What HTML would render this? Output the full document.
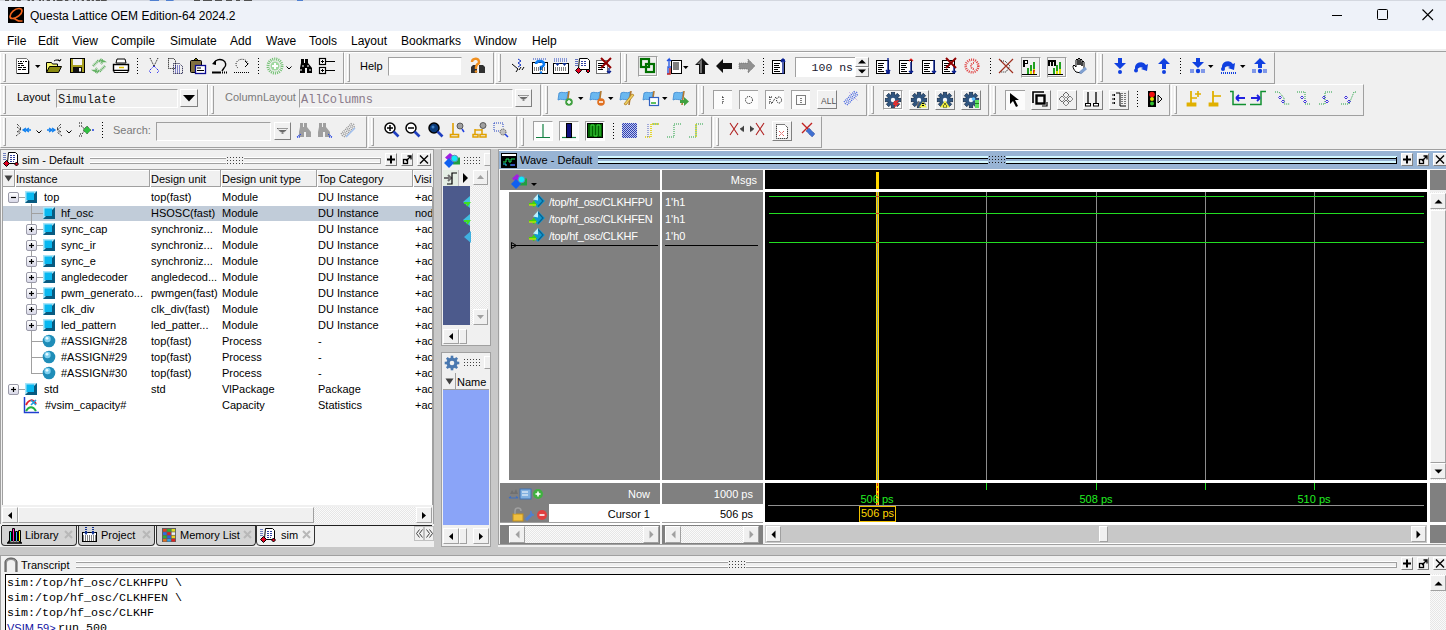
<!DOCTYPE html><html><head><meta charset="utf-8"><style>
*{margin:0;padding:0;box-sizing:border-box}
html,body{width:1446px;height:630px;overflow:hidden;background:#f0f0f0;font-family:"Liberation Sans",sans-serif;font-size:11px;color:#000}
div{position:absolute}
.t{white-space:nowrap}
svg{position:absolute;overflow:visible}
</style></head><body><div style="position:absolute;left:0px;top:0px;width:1446px;height:31px;background:#eef2f9"></div>
<svg style="left:0;top:0" width="1446" height="2"><rect width="1446" height="1" fill="#d4d8e0"/><rect x="5.0" y="0" width="4.0" height="1" fill="#505050"/><rect x="11.7" y="0" width="3.3" height="1" fill="#505050"/><rect x="16.7" y="0" width="4.1" height="1" fill="#505050"/><rect x="27.5" y="0" width="2.5" height="1" fill="#505050"/><rect x="31.7" y="0" width="2.3" height="1" fill="#505050"/><rect x="39.0" y="0" width="2.0" height="1" fill="#505050"/><rect x="42.5" y="0" width="1.5" height="1" fill="#505050"/><rect x="46.7" y="0" width="3.3" height="1" fill="#505050"/><rect x="53.0" y="0" width="2.0" height="1" fill="#505050"/><rect x="56.7" y="0" width="5.8" height="1" fill="#505050"/><rect x="65.0" y="0" width="3.3" height="1" fill="#505050"/><rect x="73.0" y="0" width="2.0" height="1" fill="#505050"/><rect x="77.5" y="0" width="1.5" height="1" fill="#505050"/><rect x="81.7" y="0" width="2.3" height="1" fill="#505050"/><rect x="86.7" y="0" width="3.3" height="1" fill="#505050"/><rect x="91.7" y="0" width="2.3" height="1" fill="#505050"/><rect x="95.8" y="0" width="4.2" height="1" fill="#505050"/><rect x="100.8" y="0" width="5.9" height="1" fill="#505050"/><rect x="194.0" y="0" width="6.0" height="1" fill="#505050"/><rect x="203.0" y="0" width="9.0" height="1" fill="#505050"/><rect x="215.0" y="0" width="7.0" height="1" fill="#505050"/><rect x="226.0" y="0" width="6.0" height="1" fill="#505050"/><rect x="236.0" y="0" width="4.0" height="1" fill="#505050"/><rect x="244.0" y="0" width="8.0" height="1" fill="#505050"/><rect x="149.8" y="0" width="9.2" height="1" fill="#5080d0"/><rect x="166.0" y="0" width="7.6" height="1" fill="#5080d0"/><rect x="297.0" y="0" width="6.0" height="1" fill="#5080d0"/></svg>
<svg style="left:8px;top:7px" width="16" height="16"><rect width="16" height="16" fill="#000"/><path d="M11 1.5c-4 0-9 4.5-9 8 0 1.5 1 2 2.5 2 4 0 9.5-4.5 9.5-7.5 0-1.5-1-2.5-3-2.5zM4.5 11.5c3 0 5 2.5 7 2.5h3" fill="none" stroke="#f0641e" stroke-width="1.7"/></svg>
<div class="t" style="left:30px;top:8px;height:16px;line-height:16px;font-size:12px;color:#000">Questa Lattice OEM Edition-64 2024.2</div>
<svg style="left:1331px;top:10px" width="12" height="10"><path d="M1 5.5h10" stroke="#000" stroke-width="1"/></svg>
<svg style="left:1377px;top:9px" width="12" height="12"><rect x="0.5" y="0.5" width="10" height="10" rx="1" fill="none" stroke="#000"/></svg>
<svg style="left:1422px;top:9px" width="12" height="12"><path d="M0.5 0.5L11 11M11 0.5L0.5 11" stroke="#000" stroke-width="1.1"/></svg>
<div style="position:absolute;left:0px;top:31px;width:1446px;height:18px;background:#fff"></div>
<div class="t" style="left:7px;top:33px;height:16px;line-height:16px;font-size:12px">File</div>
<div class="t" style="left:38px;top:33px;height:16px;line-height:16px;font-size:12px">Edit</div>
<div class="t" style="left:72px;top:33px;height:16px;line-height:16px;font-size:12px">View</div>
<div class="t" style="left:111px;top:33px;height:16px;line-height:16px;font-size:12px">Compile</div>
<div class="t" style="left:170px;top:33px;height:16px;line-height:16px;font-size:12px">Simulate</div>
<div class="t" style="left:230px;top:33px;height:16px;line-height:16px;font-size:12px">Add</div>
<div class="t" style="left:266px;top:33px;height:16px;line-height:16px;font-size:12px">Wave</div>
<div class="t" style="left:309px;top:33px;height:16px;line-height:16px;font-size:12px">Tools</div>
<div class="t" style="left:351px;top:33px;height:16px;line-height:16px;font-size:12px">Layout</div>
<div class="t" style="left:401px;top:33px;height:16px;line-height:16px;font-size:12px">Bookmarks</div>
<div class="t" style="left:474px;top:33px;height:16px;line-height:16px;font-size:12px">Window</div>
<div class="t" style="left:532px;top:33px;height:16px;line-height:16px;font-size:12px">Help</div>
<div style="position:absolute;left:0px;top:49px;width:1446px;height:99px;background:#f0f0f0"></div>
<div style="position:absolute;left:0px;top:51px;width:1446px;height:1px;background:#a0a0a0"></div>
<div style="position:absolute;left:0px;top:52px;width:344px;height:32px;border-left:1px solid #fff;border-top:1px solid #fff;border-right:1px solid #a0a0a0;border-bottom:1px solid #a0a0a0"></div>
<div style="position:absolute;left:3px;top:54px;width:3px;height:28px;border-left:1px solid #fff;border-right:1px solid #a0a0a0;border-bottom:1px solid #a0a0a0"></div>
<div style="position:absolute;left:344px;top:52px;width:150px;height:32px;border-left:1px solid #fff;border-top:1px solid #fff;border-right:1px solid #a0a0a0;border-bottom:1px solid #a0a0a0"></div>
<div style="position:absolute;left:347px;top:54px;width:3px;height:28px;border-left:1px solid #fff;border-right:1px solid #a0a0a0;border-bottom:1px solid #a0a0a0"></div>
<div style="position:absolute;left:495px;top:52px;width:126px;height:32px;border-left:1px solid #fff;border-top:1px solid #fff;border-right:1px solid #a0a0a0;border-bottom:1px solid #a0a0a0"></div>
<div style="position:absolute;left:498px;top:54px;width:3px;height:28px;border-left:1px solid #fff;border-right:1px solid #a0a0a0;border-bottom:1px solid #a0a0a0"></div>
<div style="position:absolute;left:621px;top:52px;width:475px;height:32px;border-left:1px solid #fff;border-top:1px solid #fff;border-right:1px solid #a0a0a0;border-bottom:1px solid #a0a0a0"></div>
<div style="position:absolute;left:624px;top:54px;width:3px;height:28px;border-left:1px solid #fff;border-right:1px solid #a0a0a0;border-bottom:1px solid #a0a0a0"></div>
<div style="position:absolute;left:1097px;top:52px;width:178px;height:32px;border-left:1px solid #fff;border-top:1px solid #fff;border-right:1px solid #a0a0a0;border-bottom:1px solid #a0a0a0"></div>
<div style="position:absolute;left:1100px;top:54px;width:3px;height:28px;border-left:1px solid #fff;border-right:1px solid #a0a0a0;border-bottom:1px solid #a0a0a0"></div>
<div style="position:absolute;left:0px;top:84px;width:208px;height:32px;border-left:1px solid #fff;border-top:1px solid #fff;border-right:1px solid #a0a0a0;border-bottom:1px solid #a0a0a0"></div>
<div style="position:absolute;left:3px;top:86px;width:3px;height:28px;border-left:1px solid #fff;border-right:1px solid #a0a0a0;border-bottom:1px solid #a0a0a0"></div>
<div style="position:absolute;left:208px;top:84px;width:333px;height:32px;border-left:1px solid #fff;border-top:1px solid #fff;border-right:1px solid #a0a0a0;border-bottom:1px solid #a0a0a0"></div>
<div style="position:absolute;left:211px;top:86px;width:3px;height:28px;border-left:1px solid #fff;border-right:1px solid #a0a0a0;border-bottom:1px solid #a0a0a0"></div>
<div style="position:absolute;left:542px;top:84px;width:155px;height:32px;border-left:1px solid #fff;border-top:1px solid #fff;border-right:1px solid #a0a0a0;border-bottom:1px solid #a0a0a0"></div>
<div style="position:absolute;left:545px;top:86px;width:3px;height:28px;border-left:1px solid #fff;border-right:1px solid #a0a0a0;border-bottom:1px solid #a0a0a0"></div>
<div style="position:absolute;left:698px;top:84px;width:169px;height:32px;border-left:1px solid #fff;border-top:1px solid #fff;border-right:1px solid #a0a0a0;border-bottom:1px solid #a0a0a0"></div>
<div style="position:absolute;left:701px;top:86px;width:3px;height:28px;border-left:1px solid #fff;border-right:1px solid #a0a0a0;border-bottom:1px solid #a0a0a0"></div>
<div style="position:absolute;left:868px;top:84px;width:121px;height:32px;border-left:1px solid #fff;border-top:1px solid #fff;border-right:1px solid #a0a0a0;border-bottom:1px solid #a0a0a0"></div>
<div style="position:absolute;left:871px;top:86px;width:3px;height:28px;border-left:1px solid #fff;border-right:1px solid #a0a0a0;border-bottom:1px solid #a0a0a0"></div>
<div style="position:absolute;left:990px;top:84px;width:180px;height:32px;border-left:1px solid #fff;border-top:1px solid #fff;border-right:1px solid #a0a0a0;border-bottom:1px solid #a0a0a0"></div>
<div style="position:absolute;left:993px;top:86px;width:3px;height:28px;border-left:1px solid #fff;border-right:1px solid #a0a0a0;border-bottom:1px solid #a0a0a0"></div>
<div style="position:absolute;left:1171px;top:84px;width:193px;height:32px;border-left:1px solid #fff;border-top:1px solid #fff;border-right:1px solid #a0a0a0;border-bottom:1px solid #a0a0a0"></div>
<div style="position:absolute;left:1174px;top:86px;width:3px;height:28px;border-left:1px solid #fff;border-right:1px solid #a0a0a0;border-bottom:1px solid #a0a0a0"></div>
<div style="position:absolute;left:0px;top:116px;width:367px;height:32px;border-left:1px solid #fff;border-top:1px solid #fff;border-right:1px solid #a0a0a0;border-bottom:1px solid #a0a0a0"></div>
<div style="position:absolute;left:3px;top:118px;width:3px;height:28px;border-left:1px solid #fff;border-right:1px solid #a0a0a0;border-bottom:1px solid #a0a0a0"></div>
<div style="position:absolute;left:368px;top:116px;width:149px;height:32px;border-left:1px solid #fff;border-top:1px solid #fff;border-right:1px solid #a0a0a0;border-bottom:1px solid #a0a0a0"></div>
<div style="position:absolute;left:371px;top:118px;width:3px;height:28px;border-left:1px solid #fff;border-right:1px solid #a0a0a0;border-bottom:1px solid #a0a0a0"></div>
<div style="position:absolute;left:518px;top:116px;width:194px;height:32px;border-left:1px solid #fff;border-top:1px solid #fff;border-right:1px solid #a0a0a0;border-bottom:1px solid #a0a0a0"></div>
<div style="position:absolute;left:521px;top:118px;width:3px;height:28px;border-left:1px solid #fff;border-right:1px solid #a0a0a0;border-bottom:1px solid #a0a0a0"></div>
<div style="position:absolute;left:713px;top:116px;width:109px;height:32px;border-left:1px solid #fff;border-top:1px solid #fff;border-right:1px solid #a0a0a0;border-bottom:1px solid #a0a0a0"></div>
<div style="position:absolute;left:716px;top:118px;width:3px;height:28px;border-left:1px solid #fff;border-right:1px solid #a0a0a0;border-bottom:1px solid #a0a0a0"></div>
<div style="position:absolute;left:0px;top:149px;width:1446px;height:407px;background:#c8c8c8"></div>
<div style="position:absolute;left:0px;top:149px;width:434px;height:398px;background:#f0f0f0;border-top:1px solid #a0a0a0;border-left:1px solid #a0a0a0;border-right:1px solid #a0a0a0"></div>
<div class="t" style="left:22px;top:152px;height:17px;line-height:17px;font-size:11px">sim - Default</div>
<div style="position:absolute;left:90px;top:157px;width:291px;height:1px;background:#fff"></div>
<div style="position:absolute;left:90px;top:158px;width:291px;height:1px;background:#a0a0a0"></div>
<div style="position:absolute;left:90px;top:162px;width:291px;height:1px;background:#fff"></div>
<div style="position:absolute;left:90px;top:163px;width:291px;height:1px;background:#a0a0a0"></div>
<div style="position:absolute;left:380px;top:158px;width:1px;height:6px;background:#a0a0a0"></div>
<div style="left:226px;top:156px;width:18px;height:9px;background:#f0f0f0;background-image:radial-gradient(circle,#404040 0.6px,transparent 0.9px);background-size:3px 3px;"></div>
<div style="position:absolute;left:385px;top:153px;width:12px;height:13px;background:#f0f0f0;border-right:1px solid #808080;border-bottom:1px solid #808080;border-top:1px solid #fff;border-left:1px solid #fff"></div>
<div style="position:absolute;left:401px;top:153px;width:12px;height:13px;background:#f0f0f0;border-right:1px solid #808080;border-bottom:1px solid #808080;border-top:1px solid #fff;border-left:1px solid #fff"></div>
<div style="position:absolute;left:417px;top:153px;width:14px;height:13px;background:#f0f0f0;border-right:1px solid #808080;border-bottom:1px solid #808080;border-top:1px solid #fff;border-left:1px solid #fff"></div>
<svg style="left:385px;top:153px" width="12" height="13"><path d="M6 2.5v8M2 6.5h8" stroke="#000" stroke-width="2"/></svg>
<svg style="left:401px;top:153px" width="12" height="13"><rect x="2.5" y="6.5" width="4" height="4" fill="none" stroke="#000" stroke-width="1.3"/><path d="M5 8L9.5 3.5M6.5 3h3.5v3.5" fill="none" stroke="#000" stroke-width="1.3"/></svg>
<svg style="left:417px;top:153px" width="14" height="13"><path d="M3 2.5l8 8M11 2.5l-8 8" stroke="#000" stroke-width="1.4"/></svg>
<div style="position:absolute;left:2px;top:169px;width:430px;height:18px;background:#f0f0f0;border-top:1px solid #a0a0a0;border-left:1px solid #a0a0a0;border-bottom:1px solid #a0a0a0"></div>
<div style="position:absolute;left:3px;top:170px;width:429px;height:1px;background:#fff"></div>
<div style="position:absolute;left:14px;top:170px;width:1px;height:17px;background:#a0a0a0"></div>
<div style="position:absolute;left:15px;top:170px;width:1px;height:17px;background:#fff"></div>
<div style="position:absolute;left:149px;top:170px;width:1px;height:17px;background:#a0a0a0"></div>
<div style="position:absolute;left:150px;top:170px;width:1px;height:17px;background:#fff"></div>
<div style="position:absolute;left:220px;top:170px;width:1px;height:17px;background:#a0a0a0"></div>
<div style="position:absolute;left:221px;top:170px;width:1px;height:17px;background:#fff"></div>
<div style="position:absolute;left:316px;top:170px;width:1px;height:17px;background:#a0a0a0"></div>
<div style="position:absolute;left:317px;top:170px;width:1px;height:17px;background:#fff"></div>
<div style="position:absolute;left:412px;top:170px;width:1px;height:17px;background:#a0a0a0"></div>
<div style="position:absolute;left:413px;top:170px;width:1px;height:17px;background:#fff"></div>
<svg style="left:4px;top:174px" width="9" height="9"><path d="M0.5 1.5h8L4.5 7.5z" fill="#404040"/></svg>
<div class="t" style="left:16px;top:171px;height:17px;line-height:17px;">Instance</div>
<div class="t" style="left:151px;top:171px;height:17px;line-height:17px;">Design unit</div>
<div class="t" style="left:222px;top:171px;height:17px;line-height:17px;">Design unit type</div>
<div class="t" style="left:318px;top:171px;height:17px;line-height:17px;">Top Category</div>
<div class="t" style="left:414px;top:171px;height:17px;line-height:17px;width:18px;overflow:hidden">Visit</div>
<div style="position:absolute;left:2px;top:187px;width:430px;height:318px;background:#fff;overflow:hidden;border-left:1px solid #a0a0a0"></div>
<div style="position:absolute;left:432px;top:187px;width:1px;height:318px;background:#a0a0a0"></div>
<div style="position:absolute;left:3px;top:206px;width:429px;height:15px;background:#c1ccd9"></div>
<div style="position:absolute;left:31px;top:204px;width:1px;height:170px;background:#a0a0a0"></div>
<div style="position:absolute;left:18px;top:197px;width:7px;height:1px;background:#a0a0a0"></div>
<div style="position:absolute;left:8px;top:192px;width:11px;height:11px;background:linear-gradient(#fff,#d8d8e8);border:1px solid #9a9aa8;border-radius:2px"></div>
<svg style="left:8px;top:192px" width="11" height="11"><path d="M3 5.5h5" stroke="#000" stroke-width="1.2"/></svg>
<svg style="left:25px;top:191px" width="12" height="12"><rect width="12" height="12" fill="#a8e4f8"/><path d="M12 0V12H0z" fill="#085a80"/><rect x="1.5" y="1.5" width="7.5" height="7.5" fill="#08b8f0"/></svg>
<div class="t" style="left:44px;top:189px;height:16px;line-height:16px;">top</div>
<div class="t" style="left:151px;top:189px;height:16px;line-height:16px;">top(fast)</div>
<div class="t" style="left:222px;top:189px;height:16px;line-height:16px;">Module</div>
<div class="t" style="left:318px;top:189px;height:16px;line-height:16px;">DU Instance</div>
<div class="t" style="left:415px;top:189px;height:16px;line-height:16px;width:17px;overflow:hidden">+ac</div>
<div style="position:absolute;left:32px;top:213px;width:11px;height:1px;background:#a0a0a0"></div>
<svg style="left:43px;top:207px" width="12" height="12"><rect width="12" height="12" fill="#a8e4f8"/><path d="M12 0V12H0z" fill="#085a80"/><rect x="1.5" y="1.5" width="7.5" height="7.5" fill="#08b8f0"/></svg>
<div class="t" style="left:61px;top:205px;height:16px;line-height:16px;">hf_osc</div>
<div class="t" style="left:151px;top:205px;height:16px;line-height:16px;">HSOSC(fast)</div>
<div class="t" style="left:222px;top:205px;height:16px;line-height:16px;">Module</div>
<div class="t" style="left:318px;top:205px;height:16px;line-height:16px;">DU Instance</div>
<div class="t" style="left:415px;top:205px;height:16px;line-height:16px;width:17px;overflow:hidden">nod</div>
<div style="position:absolute;left:32px;top:229px;width:11px;height:1px;background:#a0a0a0"></div>
<div style="position:absolute;left:26px;top:224px;width:11px;height:11px;background:linear-gradient(#fff,#d8d8e8);border:1px solid #9a9aa8;border-radius:2px"></div>
<svg style="left:26px;top:224px" width="11" height="11"><path d="M3 5.5h5" stroke="#000" stroke-width="1.2"/><path d="M5.5 3v5" stroke="#000" stroke-width="1.2"/></svg>
<svg style="left:43px;top:223px" width="12" height="12"><rect width="12" height="12" fill="#a8e4f8"/><path d="M12 0V12H0z" fill="#085a80"/><rect x="1.5" y="1.5" width="7.5" height="7.5" fill="#08b8f0"/></svg>
<div class="t" style="left:61px;top:221px;height:16px;line-height:16px;">sync_cap</div>
<div class="t" style="left:151px;top:221px;height:16px;line-height:16px;">synchroniz...</div>
<div class="t" style="left:222px;top:221px;height:16px;line-height:16px;">Module</div>
<div class="t" style="left:318px;top:221px;height:16px;line-height:16px;">DU Instance</div>
<div class="t" style="left:415px;top:221px;height:16px;line-height:16px;width:17px;overflow:hidden">+ac</div>
<div style="position:absolute;left:32px;top:245px;width:11px;height:1px;background:#a0a0a0"></div>
<div style="position:absolute;left:26px;top:240px;width:11px;height:11px;background:linear-gradient(#fff,#d8d8e8);border:1px solid #9a9aa8;border-radius:2px"></div>
<svg style="left:26px;top:240px" width="11" height="11"><path d="M3 5.5h5" stroke="#000" stroke-width="1.2"/><path d="M5.5 3v5" stroke="#000" stroke-width="1.2"/></svg>
<svg style="left:43px;top:239px" width="12" height="12"><rect width="12" height="12" fill="#a8e4f8"/><path d="M12 0V12H0z" fill="#085a80"/><rect x="1.5" y="1.5" width="7.5" height="7.5" fill="#08b8f0"/></svg>
<div class="t" style="left:61px;top:237px;height:16px;line-height:16px;">sync_ir</div>
<div class="t" style="left:151px;top:237px;height:16px;line-height:16px;">synchroniz...</div>
<div class="t" style="left:222px;top:237px;height:16px;line-height:16px;">Module</div>
<div class="t" style="left:318px;top:237px;height:16px;line-height:16px;">DU Instance</div>
<div class="t" style="left:415px;top:237px;height:16px;line-height:16px;width:17px;overflow:hidden">+ac</div>
<div style="position:absolute;left:32px;top:261px;width:11px;height:1px;background:#a0a0a0"></div>
<div style="position:absolute;left:26px;top:256px;width:11px;height:11px;background:linear-gradient(#fff,#d8d8e8);border:1px solid #9a9aa8;border-radius:2px"></div>
<svg style="left:26px;top:256px" width="11" height="11"><path d="M3 5.5h5" stroke="#000" stroke-width="1.2"/><path d="M5.5 3v5" stroke="#000" stroke-width="1.2"/></svg>
<svg style="left:43px;top:255px" width="12" height="12"><rect width="12" height="12" fill="#a8e4f8"/><path d="M12 0V12H0z" fill="#085a80"/><rect x="1.5" y="1.5" width="7.5" height="7.5" fill="#08b8f0"/></svg>
<div class="t" style="left:61px;top:253px;height:16px;line-height:16px;">sync_e</div>
<div class="t" style="left:151px;top:253px;height:16px;line-height:16px;">synchroniz...</div>
<div class="t" style="left:222px;top:253px;height:16px;line-height:16px;">Module</div>
<div class="t" style="left:318px;top:253px;height:16px;line-height:16px;">DU Instance</div>
<div class="t" style="left:415px;top:253px;height:16px;line-height:16px;width:17px;overflow:hidden">+ac</div>
<div style="position:absolute;left:32px;top:277px;width:11px;height:1px;background:#a0a0a0"></div>
<div style="position:absolute;left:26px;top:272px;width:11px;height:11px;background:linear-gradient(#fff,#d8d8e8);border:1px solid #9a9aa8;border-radius:2px"></div>
<svg style="left:26px;top:272px" width="11" height="11"><path d="M3 5.5h5" stroke="#000" stroke-width="1.2"/><path d="M5.5 3v5" stroke="#000" stroke-width="1.2"/></svg>
<svg style="left:43px;top:271px" width="12" height="12"><rect width="12" height="12" fill="#a8e4f8"/><path d="M12 0V12H0z" fill="#085a80"/><rect x="1.5" y="1.5" width="7.5" height="7.5" fill="#08b8f0"/></svg>
<div class="t" style="left:61px;top:269px;height:16px;line-height:16px;">angledecoder</div>
<div class="t" style="left:151px;top:269px;height:16px;line-height:16px;">angledecod...</div>
<div class="t" style="left:222px;top:269px;height:16px;line-height:16px;">Module</div>
<div class="t" style="left:318px;top:269px;height:16px;line-height:16px;">DU Instance</div>
<div class="t" style="left:415px;top:269px;height:16px;line-height:16px;width:17px;overflow:hidden">+ac</div>
<div style="position:absolute;left:32px;top:293px;width:11px;height:1px;background:#a0a0a0"></div>
<div style="position:absolute;left:26px;top:288px;width:11px;height:11px;background:linear-gradient(#fff,#d8d8e8);border:1px solid #9a9aa8;border-radius:2px"></div>
<svg style="left:26px;top:288px" width="11" height="11"><path d="M3 5.5h5" stroke="#000" stroke-width="1.2"/><path d="M5.5 3v5" stroke="#000" stroke-width="1.2"/></svg>
<svg style="left:43px;top:287px" width="12" height="12"><rect width="12" height="12" fill="#a8e4f8"/><path d="M12 0V12H0z" fill="#085a80"/><rect x="1.5" y="1.5" width="7.5" height="7.5" fill="#08b8f0"/></svg>
<div class="t" style="left:61px;top:285px;height:16px;line-height:16px;">pwm_generato...</div>
<div class="t" style="left:151px;top:285px;height:16px;line-height:16px;">pwmgen(fast)</div>
<div class="t" style="left:222px;top:285px;height:16px;line-height:16px;">Module</div>
<div class="t" style="left:318px;top:285px;height:16px;line-height:16px;">DU Instance</div>
<div class="t" style="left:415px;top:285px;height:16px;line-height:16px;width:17px;overflow:hidden">+ac</div>
<div style="position:absolute;left:32px;top:309px;width:11px;height:1px;background:#a0a0a0"></div>
<div style="position:absolute;left:26px;top:304px;width:11px;height:11px;background:linear-gradient(#fff,#d8d8e8);border:1px solid #9a9aa8;border-radius:2px"></div>
<svg style="left:26px;top:304px" width="11" height="11"><path d="M3 5.5h5" stroke="#000" stroke-width="1.2"/><path d="M5.5 3v5" stroke="#000" stroke-width="1.2"/></svg>
<svg style="left:43px;top:303px" width="12" height="12"><rect width="12" height="12" fill="#a8e4f8"/><path d="M12 0V12H0z" fill="#085a80"/><rect x="1.5" y="1.5" width="7.5" height="7.5" fill="#08b8f0"/></svg>
<div class="t" style="left:61px;top:301px;height:16px;line-height:16px;">clk_div</div>
<div class="t" style="left:151px;top:301px;height:16px;line-height:16px;">clk_div(fast)</div>
<div class="t" style="left:222px;top:301px;height:16px;line-height:16px;">Module</div>
<div class="t" style="left:318px;top:301px;height:16px;line-height:16px;">DU Instance</div>
<div class="t" style="left:415px;top:301px;height:16px;line-height:16px;width:17px;overflow:hidden">+ac</div>
<div style="position:absolute;left:32px;top:325px;width:11px;height:1px;background:#a0a0a0"></div>
<div style="position:absolute;left:26px;top:320px;width:11px;height:11px;background:linear-gradient(#fff,#d8d8e8);border:1px solid #9a9aa8;border-radius:2px"></div>
<svg style="left:26px;top:320px" width="11" height="11"><path d="M3 5.5h5" stroke="#000" stroke-width="1.2"/><path d="M5.5 3v5" stroke="#000" stroke-width="1.2"/></svg>
<svg style="left:43px;top:319px" width="12" height="12"><rect width="12" height="12" fill="#a8e4f8"/><path d="M12 0V12H0z" fill="#085a80"/><rect x="1.5" y="1.5" width="7.5" height="7.5" fill="#08b8f0"/></svg>
<div class="t" style="left:61px;top:317px;height:16px;line-height:16px;">led_pattern</div>
<div class="t" style="left:151px;top:317px;height:16px;line-height:16px;">led_patter...</div>
<div class="t" style="left:222px;top:317px;height:16px;line-height:16px;">Module</div>
<div class="t" style="left:318px;top:317px;height:16px;line-height:16px;">DU Instance</div>
<div class="t" style="left:415px;top:317px;height:16px;line-height:16px;width:17px;overflow:hidden">+ac</div>
<div style="position:absolute;left:32px;top:341px;width:11px;height:1px;background:#a0a0a0"></div>
<svg style="left:42px;top:334px" width="14" height="14"><circle cx="7" cy="7" r="6.3" fill="#1f8db8"/><circle cx="5.5" cy="5" r="3.2" fill="#7fd0ef"/><circle cx="5" cy="4.3" r="1.4" fill="#eafaff"/></svg>
<div class="t" style="left:61px;top:333px;height:16px;line-height:16px;">#ASSIGN#28</div>
<div class="t" style="left:151px;top:333px;height:16px;line-height:16px;">top(fast)</div>
<div class="t" style="left:222px;top:333px;height:16px;line-height:16px;">Process</div>
<div class="t" style="left:318px;top:333px;height:16px;line-height:16px;">-</div>
<div class="t" style="left:415px;top:333px;height:16px;line-height:16px;width:17px;overflow:hidden">+ac</div>
<div style="position:absolute;left:32px;top:357px;width:11px;height:1px;background:#a0a0a0"></div>
<svg style="left:42px;top:350px" width="14" height="14"><circle cx="7" cy="7" r="6.3" fill="#1f8db8"/><circle cx="5.5" cy="5" r="3.2" fill="#7fd0ef"/><circle cx="5" cy="4.3" r="1.4" fill="#eafaff"/></svg>
<div class="t" style="left:61px;top:349px;height:16px;line-height:16px;">#ASSIGN#29</div>
<div class="t" style="left:151px;top:349px;height:16px;line-height:16px;">top(fast)</div>
<div class="t" style="left:222px;top:349px;height:16px;line-height:16px;">Process</div>
<div class="t" style="left:318px;top:349px;height:16px;line-height:16px;">-</div>
<div class="t" style="left:415px;top:349px;height:16px;line-height:16px;width:17px;overflow:hidden">+ac</div>
<div style="position:absolute;left:32px;top:373px;width:11px;height:1px;background:#a0a0a0"></div>
<svg style="left:42px;top:366px" width="14" height="14"><circle cx="7" cy="7" r="6.3" fill="#1f8db8"/><circle cx="5.5" cy="5" r="3.2" fill="#7fd0ef"/><circle cx="5" cy="4.3" r="1.4" fill="#eafaff"/></svg>
<div class="t" style="left:61px;top:365px;height:16px;line-height:16px;">#ASSIGN#30</div>
<div class="t" style="left:151px;top:365px;height:16px;line-height:16px;">top(fast)</div>
<div class="t" style="left:222px;top:365px;height:16px;line-height:16px;">Process</div>
<div class="t" style="left:318px;top:365px;height:16px;line-height:16px;">-</div>
<div class="t" style="left:415px;top:365px;height:16px;line-height:16px;width:17px;overflow:hidden">+ac</div>
<div style="position:absolute;left:18px;top:389px;width:7px;height:1px;background:#a0a0a0"></div>
<div style="position:absolute;left:8px;top:384px;width:11px;height:11px;background:linear-gradient(#fff,#d8d8e8);border:1px solid #9a9aa8;border-radius:2px"></div>
<svg style="left:8px;top:384px" width="11" height="11"><path d="M3 5.5h5" stroke="#000" stroke-width="1.2"/><path d="M5.5 3v5" stroke="#000" stroke-width="1.2"/></svg>
<svg style="left:25px;top:383px" width="12" height="12"><rect width="12" height="12" fill="#a8e4f8"/><path d="M12 0V12H0z" fill="#085a80"/><rect x="1.5" y="1.5" width="7.5" height="7.5" fill="#08b8f0"/></svg>
<div class="t" style="left:44px;top:381px;height:16px;line-height:16px;">std</div>
<div class="t" style="left:151px;top:381px;height:16px;line-height:16px;">std</div>
<div class="t" style="left:222px;top:381px;height:16px;line-height:16px;">VlPackage</div>
<div class="t" style="left:318px;top:381px;height:16px;line-height:16px;">Package</div>
<div class="t" style="left:415px;top:381px;height:16px;line-height:16px;width:17px;overflow:hidden">+ac</div>
<svg style="left:23px;top:397px" width="16" height="16"><path d="M1.5 0v15.5H16" fill="none" stroke="#2040d0" stroke-width="1.5"/><path d="M3 8c3-6 7-6 10-1" fill="none" stroke="#e02030" stroke-width="2"/><path d="M3 14c3-5 7-5 10 0" fill="none" stroke="#20b040" stroke-width="2"/><path d="M8 3l5 5M13 3l-5 5" stroke="#20a0e0" stroke-width="1.6"/></svg>
<div class="t" style="left:45px;top:397px;height:16px;line-height:16px;">#vsim_capacity#</div>
<div class="t" style="left:151px;top:397px;height:16px;line-height:16px;"></div>
<div class="t" style="left:222px;top:397px;height:16px;line-height:16px;">Capacity</div>
<div class="t" style="left:318px;top:397px;height:16px;line-height:16px;">Statistics</div>
<div class="t" style="left:415px;top:397px;height:16px;line-height:16px;width:17px;overflow:hidden">+ac</div>
<div style="position:absolute;left:2px;top:506px;width:430px;height:17px;background:#f0f0f0"></div>
<div style="position:absolute;left:2px;top:507px;width:16px;height:16px;background:#f0f0f0;border-top:1px solid #fff;border-left:1px solid #fff;border-right:1px solid #a0a0a0;border-bottom:1px solid #a0a0a0"></div>
<svg style="left:8px;top:512px" width="5" height="8"><path d="M4 0v7L0 3.5z" fill="#000"/></svg>
<div style="position:absolute;left:18px;top:507px;width:296px;height:16px;background:#f0f0f0;border-top:1px solid #fff;border-left:1px solid #fff;border-right:1px solid #a0a0a0;border-bottom:1px solid #a0a0a0"></div>
<div style="position:absolute;left:314px;top:507px;width:102px;height:16px;background:#e8e8e8;background:repeating-conic-gradient(#fafafa 0 25%,#e6e6e6 0 50%) 0 0/2px 2px"></div>
<div style="position:absolute;left:416px;top:507px;width:16px;height:16px;background:#f0f0f0;border-top:1px solid #fff;border-left:1px solid #fff;border-right:1px solid #a0a0a0;border-bottom:1px solid #a0a0a0"></div>
<svg style="left:422px;top:512px" width="5" height="8"><path d="M0 0v7L4 3.5z" fill="#000"/></svg>
<div style="position:absolute;left:0px;top:524px;width:434px;height:23px;background:#f0f0f0"></div>
<div style="position:absolute;left:2px;top:525px;width:430px;height:1px;background:#202020"></div>
<div style="position:absolute;left:1px;top:526px;width:76px;height:20px;background:#d4d4d4;border:1px solid #303030;border-top:none;border-radius:0 0 4px 4px"></div>

<div style="position:absolute;left:78px;top:526px;width:77px;height:20px;background:#d4d4d4;border:1px solid #303030;border-top:none;border-radius:0 0 4px 4px"></div>

<div style="position:absolute;left:156px;top:526px;width:100px;height:20px;background:#d4d4d4;border:1px solid #303030;border-top:none;border-radius:0 0 4px 4px"></div>

<div style="position:absolute;left:256px;top:525px;width:59px;height:21px;background:#f0f0f0;border:1px solid #303030;border-top:1px solid #303030;border-radius:0 0 4px 4px"></div>

<div style="position:absolute;left:315px;top:526px;width:100px;height:20px;background:#f0f0f0"></div>
<div class="t" style="left:25px;top:527px;height:17px;line-height:17px;font-size:11px">Library</div>
<div class="t" style="left:101px;top:527px;height:17px;line-height:17px;font-size:11px">Project</div>
<div class="t" style="left:180px;top:527px;height:17px;line-height:17px;font-size:11px">Memory List</div>
<div class="t" style="left:281px;top:527px;height:17px;line-height:17px;font-size:11px">sim</div>
<svg style="left:64px;top:530px" width="9" height="9"><path d="M1 1l7 7M8 1l-7 7" stroke="#b8b8b8" stroke-width="2"/></svg>
<svg style="left:142px;top:530px" width="9" height="9"><path d="M1 1l7 7M8 1l-7 7" stroke="#b8b8b8" stroke-width="2"/></svg>
<svg style="left:243px;top:530px" width="9" height="9"><path d="M1 1l7 7M8 1l-7 7" stroke="#b8b8b8" stroke-width="2"/></svg>
<svg style="left:302px;top:530px" width="9" height="9"><path d="M1 1l7 7M8 1l-7 7" stroke="#b8b8b8" stroke-width="2"/></svg>
<svg style="left:6px;top:527px" width="17" height="17"><path d="M1 16h15M2 16l2-3M15 16l-2-3" stroke="#000" stroke-width="1.5"/><path d="M3.5 14V4.5h2V14zM6.5 14V1.5h2V14zM9.5 14V4.5h2V14zM12.5 14V3.5h2V14z" fill="none" stroke="#000"/><rect x="4" y="5" width="1" height="9" fill="#00f0c0"/><rect x="7" y="2" width="1" height="12" fill="#ff20c0"/><rect x="10" y="5" width="1" height="9" fill="#30b0ff"/><rect x="13" y="4" width="1" height="10" fill="#ffff00"/></svg>
<svg style="left:82px;top:527px" width="15" height="15"><rect x="0.5" y="5.5" width="14" height="9" fill="#fff" stroke="#000"/><path d="M1 9h13M1 11h13M1 13h13" stroke="#000" stroke-dasharray="1 1"/><path d="M4 0v5M11 0v5" stroke="#103090" stroke-width="2" stroke-dasharray="1 1"/><path d="M2 5l2 3 2-3zM9 5l2 3 2-3z" fill="#103090"/></svg>
<svg style="left:162px;top:528px" width="14" height="14"><rect width="14" height="14" fill="#606060"/><rect x="1.0" y="1.0" width="3.5" height="2.6" fill="#e04020"/><rect x="5.3" y="1.0" width="3.5" height="2.6" fill="#30b030"/><rect x="9.6" y="1.0" width="3.5" height="2.6" fill="#e0e020"/><rect x="1.0" y="4.3" width="3.5" height="2.6" fill="#3070e0"/><rect x="5.3" y="4.3" width="3.5" height="2.6" fill="#e02020"/><rect x="9.6" y="4.3" width="3.5" height="2.6" fill="#f0f0f0"/><rect x="1.0" y="7.6" width="3.5" height="2.6" fill="#30b030"/><rect x="5.3" y="7.6" width="3.5" height="2.6" fill="#3060e0"/><rect x="9.6" y="7.6" width="3.5" height="2.6" fill="#f0d020"/><rect x="1.0" y="10.899999999999999" width="3.5" height="2.6" fill="#e07020"/><rect x="5.3" y="10.899999999999999" width="3.5" height="2.6" fill="#30a0e0"/><rect x="9.6" y="10.899999999999999" width="3.5" height="2.6" fill="#e02020"/></svg>
<svg style="left:260px;top:527px" width="17" height="17"><path d="M0 2.5h3M0 4.5h3M0 6.5h3M0 8.5h3" stroke="#7080c0"/><path d="M5.5 1.5h7l2 2v9h-9l-1-1z" fill="#fff" stroke="#000"/><path d="M7 4.5h5M7 6.5h5M7 8.5h5M7 10.5h4" stroke="#3040a0" stroke-dasharray="2 1"/><path d="M3.5 9.5l-3 3 3 3 3-3z" fill="#e00020" stroke="#000"/><path d="M13.5 11l-2 2 2 2 2-2z" fill="#e00020" stroke="#000"/></svg>
<svg style="left:3px;top:151px" width="17" height="17"><path d="M0 2.5h3M0 4.5h3M0 6.5h3M0 8.5h3" stroke="#7080c0"/><path d="M5.5 1.5h7l2 2v9h-9l-1-1z" fill="#fff" stroke="#000"/><path d="M7 4.5h5M7 6.5h5M7 8.5h5M7 10.5h4" stroke="#3040a0" stroke-dasharray="2 1"/><path d="M3.5 9.5l-3 3 3 3 3-3z" fill="#e00020" stroke="#000"/><path d="M13.5 11l-2 2 2 2 2-2z" fill="#e00020" stroke="#000"/></svg>
<div style="position:absolute;left:414px;top:526px;width:10px;height:15px;background:#f0f0f0;border:1px solid #c0c0c0"></div>
<div style="position:absolute;left:424px;top:526px;width:10px;height:15px;background:#f0f0f0;border:1px solid #c0c0c0"></div>
<svg style="left:416px;top:529px" width="7" height="9"><path d="M3.5 0.5L0.5 4.5 3.5 8.5M6.5 0.5L3.5 4.5 6.5 8.5" fill="none" stroke="#404040"/></svg>
<svg style="left:426px;top:529px" width="7" height="9"><path d="M0.5 0.5l3 4-3 4M3.5 0.5l3 4-3 4" fill="none" stroke="#404040"/></svg>
<div style="position:absolute;left:441px;top:149px;width:50px;height:197px;background:#f0f0f0;border:1px solid #a0a0a0"></div>
<svg style="left:444px;top:152px" width="17" height="17"><path d="M1 5.5l5-4.5 4 3.5-5 4.5z" fill="#a020e0"/><rect x="9" y="5.5" width="7" height="7" fill="#20a040"/><circle cx="10.5" cy="6.5" r="3.3" fill="#10e8f8" stroke="#6090b0"/><path d="M5 6l5 5-5 5-5-5z" fill="#1060f0"/></svg>
<div style="left:463px;top:156px;width:18px;height:9px;background:#f0f0f0;background-image:radial-gradient(circle,#404040 0.6px,transparent 0.9px);background-size:3px 3px;"></div>
<div style="position:absolute;left:484px;top:153px;width:6px;height:13px;background:#f0f0f0;border-left:1px solid #fff;border-top:1px solid #fff;border-bottom:1px solid #a0a0a0"></div>
<div style="position:absolute;left:443px;top:170px;width:16px;height:16px;background:#e4eee4;border-right:1px solid #c0c0c0"></div>
<div style="position:absolute;left:459px;top:170px;width:12px;height:16px;background:#f0f0f0"></div>
<svg style="left:444px;top:172px" width="14" height="13"><path d="M0 6h5" stroke="#707070" stroke-width="2"/><path d="M4 3l3 3-3 3" fill="none" stroke="#707070" stroke-width="2"/><path d="M3 12h5V1h5" fill="none" stroke="#000" stroke-width="1.2"/></svg>
<svg style="left:463px;top:173px" width="6" height="10"><path d="M0 0v10l5-5z" fill="#000"/></svg>
<div style="position:absolute;left:443px;top:186px;width:27px;height:139px;background:#4c5a8c"></div>
<svg style="left:463px;top:196px" width="8" height="12"><path d="M7 0L0 6l7 6z" fill="#40c0e0"/><path d="M1 7h5l-2 3" fill="none" stroke="#40e020" stroke-width="2"/></svg>
<svg style="left:463px;top:214px" width="8" height="12"><path d="M7 0L0 6l7 6z" fill="#40c0e0"/><path d="M1 7h5l-2 3" fill="none" stroke="#40e020" stroke-width="2"/></svg>
<svg style="left:464px;top:231px" width="7" height="12"><path d="M7 0L0 6l7 6z" fill="#40b0e0"/></svg>
<div style="position:absolute;left:471px;top:186px;width:17px;height:139px;background:#ececec;background:repeating-conic-gradient(#fafafa 0 25%,#e6e6e6 0 50%) 0 0/2px 2px"></div>
<div style="position:absolute;left:473px;top:170px;width:15px;height:15px;background:#f0f0f0;border-top:1px solid #fff;border-left:1px solid #fff;border-right:1px solid #a0a0a0;border-bottom:1px solid #a0a0a0"></div>
<svg style="left:477px;top:175px" width="7" height="4"><path d="M0 4l3.5-4L7 4z" fill="#a0a0a0"/></svg>
<div style="position:absolute;left:473px;top:309px;width:15px;height:16px;background:#f0f0f0;border-top:1px solid #fff;border-left:1px solid #fff;border-right:1px solid #a0a0a0;border-bottom:1px solid #a0a0a0"></div>
<svg style="left:477px;top:315px" width="7" height="4"><path d="M0 0l3.5 4L7 0z" fill="#a0a0a0"/></svg>
<div style="position:absolute;left:443px;top:329px;width:16px;height:15px;background:#f0f0f0;border-top:1px solid #fff;border-left:1px solid #fff;border-right:1px solid #a0a0a0;border-bottom:1px solid #a0a0a0"></div>
<svg style="left:449px;top:333px" width="4" height="7"><path d="M4 0v7L0 3.5z" fill="#000"/></svg>
<div style="position:absolute;left:459px;top:329px;width:8px;height:15px;background:#f0f0f0;border-top:1px solid #fff;border-left:1px solid #fff;border-right:1px solid #a0a0a0;border-bottom:1px solid #a0a0a0"></div>
<div style="position:absolute;left:441px;top:352px;width:50px;height:195px;background:#f0f0f0;border:1px solid #a0a0a0"></div>
<svg style="left:444px;top:355px" width="16" height="16"><g fill="#4a78b0"><circle cx="8" cy="8" r="5.5"/></g><g stroke="#4a78b0" stroke-width="2.6"><path d="M8 8L15.30 8.00"/><path d="M8 8L13.16 13.16"/><path d="M8 8L8.00 15.30"/><path d="M8 8L2.84 13.16"/><path d="M8 8L0.70 8.00"/><path d="M8 8L2.84 2.84"/><path d="M8 8L8.00 0.70"/><path d="M8 8L13.16 2.84"/></g><circle cx="8" cy="8" r="2.3" fill="#f0f0f0"/></svg>
<div style="left:463px;top:358px;width:18px;height:9px;background:#f0f0f0;background-image:radial-gradient(circle,#404040 0.6px,transparent 0.9px);background-size:3px 3px;"></div>
<div style="position:absolute;left:484px;top:356px;width:6px;height:13px;background:#f0f0f0;border-left:1px solid #fff;border-top:1px solid #fff;border-bottom:1px solid #a0a0a0"></div>
<div style="position:absolute;left:443px;top:372px;width:46px;height:18px;background:#f0f0f0;border-bottom:1px solid #a0a0a0"></div>
<div style="position:absolute;left:455px;top:373px;width:1px;height:16px;background:#a0a0a0"></div>
<svg style="left:445px;top:377px" width="9" height="9"><path d="M0.5 1.5h8L4.5 7.5z" fill="#404040"/></svg>
<div class="t" style="left:457px;top:374px;height:17px;line-height:17px;">Name</div>
<div style="position:absolute;left:443px;top:390px;width:46px;height:135px;background:#8aa4f8"></div>
<div style="position:absolute;left:443px;top:526px;width:46px;height:19px;background:#f0f0f0"></div>
<div style="position:absolute;left:443px;top:528px;width:16px;height:16px;background:#f0f0f0;border-top:1px solid #fff;border-left:1px solid #fff;border-right:1px solid #a0a0a0;border-bottom:1px solid #a0a0a0"></div>
<svg style="left:449px;top:533px" width="4" height="7"><path d="M4 0v7L0 3.5z" fill="#000"/></svg>
<div style="position:absolute;left:459px;top:528px;width:8px;height:16px;background:#f0f0f0;border-top:1px solid #fff;border-left:1px solid #fff;border-right:1px solid #a0a0a0;border-bottom:1px solid #a0a0a0"></div>
<div style="position:absolute;left:473px;top:528px;width:16px;height:16px;background:#f0f0f0;border-top:1px solid #fff;border-left:1px solid #fff;border-right:1px solid #a0a0a0;border-bottom:1px solid #a0a0a0"></div>
<svg style="left:479px;top:533px" width="4" height="7"><path d="M0 0v7L4 3.5z" fill="#000"/></svg>
<div style="position:absolute;left:498px;top:149px;width:948px;height:398px;background:#f0f0f0;border-top:1px solid #a0a0a0;border-left:1px solid #a0a0a0"></div>
<div style="position:absolute;left:499px;top:150px;width:947px;height:1px;background:#fff"></div>
<div style="position:absolute;left:499px;top:151px;width:947px;height:18px;background:#98b4d4"></div>
<div style="position:absolute;left:499px;top:169px;width:947px;height:1px;background:#f4f4f4"></div>
<div style="position:absolute;left:598px;top:156px;width:799px;height:2px;background:#d4f8ff"></div>
<div style="position:absolute;left:598px;top:158px;width:799px;height:1px;background:#000"></div>
<div style="position:absolute;left:598px;top:161px;width:799px;height:2px;background:#d4f8ff"></div>
<div style="position:absolute;left:598px;top:163px;width:799px;height:1px;background:#000"></div>
<div style="position:absolute;left:1396px;top:157px;width:1px;height:7px;background:#000"></div>
<div style="left:988px;top:155px;width:18px;height:10px;background:#98b4d4;background-image:radial-gradient(circle,#202020 0.6px,transparent 0.9px);background-size:3px 3px;"></div>
<svg style="left:501px;top:153px" width="16" height="15"><rect x="0.5" y="0.5" width="15" height="14" fill="#fff" stroke="#000"/><rect x="1" y="3" width="14" height="11" fill="#000"/><path d="M2 9h3V6h3v3h2V6h4" fill="none" stroke="#20e060" stroke-width="1"/><path d="M2 11h3v2M9 12h5" fill="none" stroke="#20d0f0"/><path d="M10 12h4" stroke="#6040ff"/></svg>
<div class="t" style="left:520px;top:151px;height:18px;line-height:18px;font-size:11px">Wave - Default</div>
<div style="position:absolute;left:1401px;top:153px;width:12px;height:13px;background:#f0f0f0;border-right:1px solid #808080;border-bottom:1px solid #808080;border-top:1px solid #fff;border-left:1px solid #fff"></div>
<div style="position:absolute;left:1417px;top:153px;width:12px;height:13px;background:#f0f0f0;border-right:1px solid #808080;border-bottom:1px solid #808080;border-top:1px solid #fff;border-left:1px solid #fff"></div>
<div style="position:absolute;left:1433px;top:153px;width:14px;height:13px;background:#f0f0f0;border-right:1px solid #808080;border-bottom:1px solid #808080;border-top:1px solid #fff;border-left:1px solid #fff"></div>
<svg style="left:1401px;top:153px" width="12" height="13"><path d="M6 2.5v8M2 6.5h8" stroke="#000" stroke-width="2"/></svg>
<svg style="left:1417px;top:153px" width="12" height="13"><rect x="2.5" y="6.5" width="4" height="4" fill="none" stroke="#000" stroke-width="1.3"/><path d="M5 8L9.5 3.5M6.5 3h3.5v3.5" fill="none" stroke="#000" stroke-width="1.3"/></svg>
<svg style="left:1433px;top:153px" width="14" height="13"><path d="M3 2.5l8 8M11 2.5l-8 8" stroke="#000" stroke-width="1.4"/></svg>
<div style="position:absolute;left:500px;top:170px;width:160px;height:20px;background:#808080"></div>
<div style="position:absolute;left:660px;top:170px;width:2px;height:355px;background:#fff"></div>
<div style="position:absolute;left:662px;top:170px;width:101px;height:20px;background:#808080"></div>
<div style="position:absolute;left:763px;top:170px;width:2px;height:355px;background:#fff"></div>
<div style="position:absolute;left:500px;top:190px;width:263px;height:2px;background:#fff"></div>
<svg style="left:511px;top:173px" width="28" height="17"><path d="M1 5.5l5-4.5 4 3.5-5 4.5z" fill="#a020e0"/><rect x="9" y="5.5" width="7" height="7" fill="#20a040"/><circle cx="10.5" cy="6.5" r="3.3" fill="#10e8f8" stroke="#6090b0"/><path d="M5 6l5 5-5 5-5-5z" fill="#1060f0"/><path d="M20 10h6l-3 3z" fill="#000"/></svg>
<div class="t" style="left:700px;top:172px;height:17px;line-height:17px;color:#fff;text-align:right;width:57px">Msgs</div>
<div style="position:absolute;left:500px;top:192px;width:160px;height:288px;background:#808080"></div>
<div style="position:absolute;left:500px;top:192px;width:9px;height:288px;background:#fff"></div>
<div style="position:absolute;left:662px;top:192px;width:101px;height:288px;background:#808080"></div>
<svg style="left:528px;top:194px" width="18" height="16"><path d="M10 0l7 7-7 7-5-5z" fill="#109ad0"/><path d="M10 1.5l5 5.5-5 5.5" fill="none" stroke="#0a6090" stroke-width="1.2"/><path d="M10 0l-5 5.5 5 1z" fill="#b8f0ff"/><path d="M1 10h6l-2 -2.5M7 10l-2 2.5" fill="none" stroke="#40d010" stroke-width="2.2"/><path d="M1 11h7" stroke="#f0f000" stroke-width="1"/></svg>
<div class="t" style="left:549px;top:194px;height:16px;line-height:16px;color:#fff;letter-spacing:-0.25px">/top/hf_osc/CLKHFPU</div>
<div class="t" style="left:665px;top:194px;height:16px;line-height:16px;color:#fff">1'h1</div>
<svg style="left:528px;top:211px" width="18" height="16"><path d="M10 0l7 7-7 7-5-5z" fill="#109ad0"/><path d="M10 1.5l5 5.5-5 5.5" fill="none" stroke="#0a6090" stroke-width="1.2"/><path d="M10 0l-5 5.5 5 1z" fill="#b8f0ff"/><path d="M1 10h6l-2 -2.5M7 10l-2 2.5" fill="none" stroke="#40d010" stroke-width="2.2"/><path d="M1 11h7" stroke="#f0f000" stroke-width="1"/></svg>
<div class="t" style="left:549px;top:211px;height:16px;line-height:16px;color:#fff;letter-spacing:-0.25px">/top/hf_osc/CLKHFEN</div>
<div class="t" style="left:665px;top:211px;height:16px;line-height:16px;color:#fff">1'h1</div>
<svg style="left:528px;top:228px" width="18" height="16"><path d="M10 0l7 7-7 7-5-5z" fill="#109ad0"/><path d="M10 1.5l5 5.5-5 5.5" fill="none" stroke="#0a6090" stroke-width="1.2"/><path d="M10 0l-5 5.5 5 1z" fill="#b8f0ff"/><path d="M1 10h6l-2 -2.5M7 10l-2 2.5" fill="none" stroke="#40d010" stroke-width="2.2"/><path d="M1 11h7" stroke="#f0f000" stroke-width="1"/></svg>
<div class="t" style="left:549px;top:228px;height:16px;line-height:16px;color:#fff;letter-spacing:-0.25px">/top/hf_osc/CLKHF</div>
<div class="t" style="left:665px;top:228px;height:16px;line-height:16px;color:#fff">1'h0</div>
<div style="position:absolute;left:512px;top:245px;width:146px;height:1px;background:#000"></div>
<div style="position:absolute;left:665px;top:245px;width:93px;height:1px;background:#000"></div>
<svg style="left:511px;top:242px" width="6" height="7"><path d="M0.5 0.5v6l5-3z" fill="none" stroke="#000"/></svg>
<div style="position:absolute;left:500px;top:480px;width:263px;height:3px;background:#fff"></div>
<div style="position:absolute;left:500px;top:483px;width:160px;height:21px;background:#808080"></div>
<div style="position:absolute;left:662px;top:483px;width:101px;height:21px;background:#808080"></div>
<div style="position:absolute;left:500px;top:504px;width:49px;height:19px;background:#808080"></div>
<div style="position:absolute;left:549px;top:504px;width:111px;height:19px;background:#fff"></div>
<div style="position:absolute;left:662px;top:504px;width:101px;height:19px;background:#fff"></div>
<div class="t" style="left:600px;top:486px;height:16px;line-height:16px;color:#fff;text-align:right;width:50px">Now</div>
<div class="t" style="left:590px;top:506px;height:16px;line-height:16px;color:#000;text-align:right;width:60px">Cursor 1</div>
<div class="t" style="left:690px;top:486px;height:16px;line-height:16px;color:#fff;text-align:right;width:63px">1000 ps</div>
<div class="t" style="left:690px;top:506px;height:16px;line-height:16px;color:#000;text-align:right;width:63px">506 ps</div>
<div style="position:absolute;left:500px;top:522px;width:263px;height:3px;background:#fff"></div>
<div style="position:absolute;left:500px;top:522px;width:160px;height:1px;background:#a0a0a0"></div>
<div style="position:absolute;left:662px;top:522px;width:101px;height:1px;background:#a0a0a0"></div>
<div style="position:absolute;left:500px;top:525px;width:160px;height:19px;background:#808080"></div>
<div style="position:absolute;left:662px;top:525px;width:101px;height:19px;background:#808080"></div>
<svg style="left:508px;top:487px" width="38" height="14"><path d="M1 11h9M1 11l2-1.5M10 11l-2-1.5" stroke="#4070c0" stroke-width="1.2" fill="none"/><path d="M2 7l2-4 2 3 2-4 2 5" fill="#707070"/><rect x="12" y="2" width="11" height="10" fill="#80b0e0" stroke="#4070b0"/><path d="M14 5h6M14 8h6" stroke="#fff"/><circle cx="30" cy="7" r="5" fill="#40b040"/><path d="M30 4.5v5M27.5 7h5" stroke="#fff" stroke-width="1.6"/></svg>
<svg style="left:512px;top:507px" width="36" height="15"><rect x="1" y="7" width="10" height="7" fill="#f0c040" stroke="#c09020"/><path d="M3 7V4a3 3 0 0 1 6 0" fill="none" stroke="#a0a0a0" stroke-width="1.5"/><path d="M14 13l6-6" stroke="#5080d0" stroke-width="3"/><path d="M19 4a3 3 0 0 0 3 4" fill="none" stroke="#5080d0" stroke-width="1.6"/><circle cx="30" cy="8" r="5" fill="#e04040"/><path d="M27.5 8h5" stroke="#fff" stroke-width="1.6"/></svg>
<div style="position:absolute;left:509px;top:526px;width:150px;height:17px;background:#e8e8e8;background:repeating-conic-gradient(#fafafa 0 25%,#e6e6e6 0 50%) 0 0/2px 2px"></div>
<div style="position:absolute;left:509px;top:526px;width:16px;height:17px;background:#f0f0f0;border-top:1px solid #fff;border-left:1px solid #fff;border-right:1px solid #a0a0a0;border-bottom:1px solid #a0a0a0"></div>
<div style="position:absolute;left:643px;top:526px;width:16px;height:17px;background:#f0f0f0;border-top:1px solid #fff;border-left:1px solid #fff;border-right:1px solid #a0a0a0;border-bottom:1px solid #a0a0a0"></div>
<svg style="left:515px;top:530px" width="5" height="9"><path d="M4.5 0.5v8L0.5 4.5z" fill="#a0a0a0"/></svg>
<svg style="left:649px;top:530px" width="5" height="9"><path d="M0.5 0.5v8L4.5 4.5z" fill="#a0a0a0"/></svg>
<div style="position:absolute;left:665px;top:526px;width:94px;height:17px;background:#e8e8e8;background:repeating-conic-gradient(#fafafa 0 25%,#e6e6e6 0 50%) 0 0/2px 2px"></div>
<div style="position:absolute;left:665px;top:526px;width:16px;height:17px;background:#f0f0f0;border-top:1px solid #fff;border-left:1px solid #fff;border-right:1px solid #a0a0a0;border-bottom:1px solid #a0a0a0"></div>
<div style="position:absolute;left:743px;top:526px;width:16px;height:17px;background:#f0f0f0;border-top:1px solid #fff;border-left:1px solid #fff;border-right:1px solid #a0a0a0;border-bottom:1px solid #a0a0a0"></div>
<svg style="left:671px;top:530px" width="5" height="9"><path d="M4.5 0.5v8L0.5 4.5z" fill="#a0a0a0"/></svg>
<svg style="left:749px;top:530px" width="5" height="9"><path d="M0.5 0.5v8L4.5 4.5z" fill="#a0a0a0"/></svg>
<div style="position:absolute;left:765px;top:170px;width:662px;height:19px;background:#000"></div>
<div style="position:absolute;left:765px;top:189px;width:662px;height:3px;background:#fff"></div>
<div style="position:absolute;left:765px;top:192px;width:662px;height:288px;background:#000"></div>
<div style="position:absolute;left:1427px;top:170px;width:3px;height:374px;background:#fff"></div>
<div style="position:absolute;left:1430px;top:170px;width:16px;height:20px;background:#808080"></div>
<div style="position:absolute;left:986px;top:192px;width:1px;height:288px;background:#8c8c8c"></div>
<div style="position:absolute;left:1096px;top:192px;width:1px;height:288px;background:#8c8c8c"></div>
<div style="position:absolute;left:1205px;top:192px;width:1px;height:288px;background:#8c8c8c"></div>
<div style="position:absolute;left:1314px;top:192px;width:1px;height:288px;background:#8c8c8c"></div>
<div style="position:absolute;left:769px;top:196px;width:655px;height:1px;background:#22dd22"></div>
<div style="position:absolute;left:769px;top:213px;width:655px;height:1px;background:#22dd22"></div>
<div style="position:absolute;left:769px;top:242px;width:655px;height:1px;background:#22dd22"></div>
<div style="position:absolute;left:876px;top:172px;width:3px;height:17px;background:#ffd700"></div>
<div style="position:absolute;left:876px;top:192px;width:3px;height:288px;background:#ffd200"></div>
<div style="position:absolute;left:877px;top:192px;width:1px;height:288px;background:#8aa88a"></div>
<div style="position:absolute;left:876px;top:196px;width:3px;height:1px;background:#d03020"></div>
<div style="position:absolute;left:876px;top:213px;width:3px;height:1px;background:#d03020"></div>
<div style="position:absolute;left:876px;top:242px;width:3px;height:1px;background:#d03020"></div>
<div style="position:absolute;left:765px;top:480px;width:662px;height:3px;background:#fff"></div>
<div style="position:absolute;left:765px;top:483px;width:662px;height:39px;background:#000"></div>
<div style="position:absolute;left:768px;top:505px;width:656px;height:1px;background:#909090"></div>
<div style="position:absolute;left:986px;top:483px;width:1px;height:7px;background:#22dd22"></div>
<div style="position:absolute;left:1096px;top:483px;width:1px;height:7px;background:#22dd22"></div>
<div style="position:absolute;left:1205px;top:483px;width:1px;height:7px;background:#22dd22"></div>
<div style="position:absolute;left:1314px;top:483px;width:1px;height:7px;background:#22dd22"></div>
<div style="position:absolute;left:876px;top:483px;width:3px;height:22px;background:#ffd700"></div>
<svg style="left:877px;top:483px" width="1" height="22"><path d="M0.5 0v22" stroke="#e02020" stroke-dasharray="3 2"/></svg>
<div class="t" style="left:847px;top:491px;height:16px;line-height:16px;color:#22ee22;width:60px;text-align:center">506 ps</div>
<div class="t" style="left:1066px;top:491px;height:16px;line-height:16px;color:#22ee22;width:60px;text-align:center">508 ps</div>
<div class="t" style="left:1284px;top:491px;height:16px;line-height:16px;color:#22ee22;width:60px;text-align:center">510 ps</div>
<div style="position:absolute;left:859px;top:506px;width:37px;height:16px;background:#000;border:1px solid #f0c000"></div>
<div class="t" style="left:859px;top:506px;height:15px;line-height:15px;color:#ffd700;width:37px;text-align:center">506 ps</div>
<div style="position:absolute;left:765px;top:522px;width:662px;height:3px;background:#fff"></div>
<div style="position:absolute;left:765px;top:525px;width:662px;height:18px;background:#c8c8c8"></div>
<div style="position:absolute;left:766px;top:526px;width:15px;height:16px;background:#f0f0f0;border-top:1px solid #fff;border-left:1px solid #fff;border-right:1px solid #a0a0a0;border-bottom:1px solid #a0a0a0"></div>
<svg style="left:771px;top:530px" width="5" height="9"><path d="M4.5 0.5v8L0.5 4.5z" fill="#000"/></svg>
<div style="position:absolute;left:1099px;top:526px;width:9px;height:16px;background:#f0f0f0;border-top:1px solid #fff;border-left:1px solid #fff;border-right:1px solid #a0a0a0;border-bottom:1px solid #a0a0a0"></div>
<div style="position:absolute;left:1411px;top:526px;width:15px;height:16px;background:#f0f0f0;border-top:1px solid #fff;border-left:1px solid #fff;border-right:1px solid #a0a0a0;border-bottom:1px solid #a0a0a0"></div>
<svg style="left:1416px;top:530px" width="5" height="9"><path d="M0.5 0.5v8L4.5 4.5z" fill="#000"/></svg>
<div style="position:absolute;left:765px;top:543px;width:662px;height:1px;background:#fff"></div>
<div style="position:absolute;left:1430px;top:192px;width:16px;height:288px;background:#ececec;background:repeating-conic-gradient(#fafafa 0 25%,#e6e6e6 0 50%) 0 0/2px 2px"></div>
<div style="position:absolute;left:1430px;top:193px;width:16px;height:16px;background:#f0f0f0;border-top:1px solid #fff;border-left:1px solid #fff;border-right:1px solid #a0a0a0;border-bottom:1px solid #a0a0a0"></div>
<svg style="left:1434px;top:199px" width="9" height="5"><path d="M0.5 4.5h8L4.5 0.5z" fill="#000"/></svg>
<div style="position:absolute;left:1430px;top:210px;width:16px;height:253px;background:#f0f0f0;border-top:1px solid #fff;border-left:1px solid #fff;border-right:1px solid #a0a0a0;border-bottom:1px solid #a0a0a0"></div>
<div style="position:absolute;left:1430px;top:463px;width:16px;height:16px;background:#f0f0f0;border-top:1px solid #fff;border-left:1px solid #fff;border-right:1px solid #a0a0a0;border-bottom:1px solid #a0a0a0"></div>
<svg style="left:1434px;top:469px" width="9" height="5"><path d="M0.5 0.5h8L4.5 4.5z" fill="#000"/></svg>
<div style="position:absolute;left:1430px;top:480px;width:16px;height:3px;background:#fff"></div>
<div style="position:absolute;left:1430px;top:483px;width:16px;height:39px;background:#808080"></div>
<div style="position:absolute;left:1430px;top:522px;width:16px;height:3px;background:#fff"></div>
<div style="position:absolute;left:1430px;top:525px;width:16px;height:18px;background:#808080"></div>
<div style="position:absolute;left:498px;top:544px;width:948px;height:3px;background:#f0f0f0;border-top:1px solid #a0a0a0"></div>
<div style="position:absolute;left:0px;top:555px;width:1446px;height:75px;background:#f0f0f0;border-top:1px solid #a0a0a0;border-left:1px solid #a0a0a0"></div>
<svg style="left:4px;top:557px" width="14" height="16"><path d="M1 15V5a6 4 0 0 1 12 0v10" fill="#909090" stroke="#505050"/><path d="M3 15V6a4 3 0 0 1 8 0v9" fill="#f0f0f0"/></svg>
<div class="t" style="left:21px;top:556px;height:18px;line-height:18px;font-size:11px">Transcript</div>
<div style="position:absolute;left:76px;top:561px;width:1321px;height:1px;background:#fff"></div>
<div style="position:absolute;left:76px;top:562px;width:1321px;height:1px;background:#a0a0a0"></div>
<div style="position:absolute;left:76px;top:566px;width:1321px;height:1px;background:#fff"></div>
<div style="position:absolute;left:76px;top:567px;width:1321px;height:1px;background:#a0a0a0"></div>
<div style="position:absolute;left:1396px;top:562px;width:1px;height:6px;background:#a0a0a0"></div>
<div style="left:728px;top:560px;width:18px;height:9px;background:#f0f0f0;background-image:radial-gradient(circle,#404040 0.6px,transparent 0.9px);background-size:3px 3px;"></div>
<div style="position:absolute;left:1401px;top:557px;width:12px;height:13px;background:#f0f0f0;border-right:1px solid #808080;border-bottom:1px solid #808080;border-top:1px solid #fff;border-left:1px solid #fff"></div>
<div style="position:absolute;left:1417px;top:557px;width:12px;height:13px;background:#f0f0f0;border-right:1px solid #808080;border-bottom:1px solid #808080;border-top:1px solid #fff;border-left:1px solid #fff"></div>
<div style="position:absolute;left:1433px;top:557px;width:14px;height:13px;background:#f0f0f0;border-right:1px solid #808080;border-bottom:1px solid #808080;border-top:1px solid #fff;border-left:1px solid #fff"></div>
<svg style="left:1401px;top:557px" width="12" height="13"><path d="M6 2.5v8M2 6.5h8" stroke="#000" stroke-width="2"/></svg>
<svg style="left:1417px;top:557px" width="12" height="13"><rect x="2.5" y="6.5" width="4" height="4" fill="none" stroke="#000" stroke-width="1.3"/><path d="M5 8L9.5 3.5M6.5 3h3.5v3.5" fill="none" stroke="#000" stroke-width="1.3"/></svg>
<svg style="left:1433px;top:557px" width="14" height="13"><path d="M3 2.5l8 8M11 2.5l-8 8" stroke="#000" stroke-width="1.4"/></svg>
<div style="position:absolute;left:5px;top:574px;width:1425px;height:56px;background:#fff;border-top:1px solid #000;border-left:1px solid #000"></div>
<div class="t" style="left:7px;top:576px;height:15px;line-height:15px;font-family:'Liberation Mono',monospace;font-size:11.67px;color:#000">sim:/top/hf_osc/CLKHFPU \</div>
<div class="t" style="left:7px;top:591px;height:15px;line-height:15px;font-family:'Liberation Mono',monospace;font-size:11.67px;color:#000">sim:/top/hf_osc/CLKHFEN \</div>
<div class="t" style="left:7px;top:606px;height:15px;line-height:15px;font-family:'Liberation Mono',monospace;font-size:11.67px;color:#000">sim:/top/hf_osc/CLKHF</div>
<div class="t" style="left:7px;top:621px;height:15px;line-height:15px;color:#1010a0;font-size:11px">VSIM 59&gt;</div>
<div class="t" style="left:58px;top:621px;height:15px;line-height:15px;font-family:'Liberation Mono',monospace;font-size:11.67px;color:#000">run 500</div>
<div style="position:absolute;left:1430px;top:574px;width:16px;height:56px;background:#ececec;background:repeating-conic-gradient(#fafafa 0 25%,#e6e6e6 0 50%) 0 0/2px 2px"></div>
<div style="position:absolute;left:1430px;top:575px;width:16px;height:16px;background:#f0f0f0;border-top:1px solid #fff;border-left:1px solid #fff;border-right:1px solid #a0a0a0;border-bottom:1px solid #a0a0a0"></div>
<svg style="left:1434px;top:581px" width="9" height="5"><path d="M0.5 4.5h8L4.5 0.5z" fill="#000"/></svg>
<svg style="left:16px;top:58px" width="14" height="16" viewBox="0 0 14 16"><path d="M0.5 0.5h10l2.5 2.5v12.5H0.5z" fill="#fff" stroke="#707070"/><path d="M12.5 3v13M1 15.5h12" stroke="#000"/><g fill="#000"><rect x="2" y="3" width="1" height="1"/><rect x="4" y="3" width="2" height="1"/><rect x="7" y="3" width="1" height="1"/><rect x="9" y="3" width="2" height="1"/><rect x="2" y="5" width="5" height="1"/><rect x="2" y="7" width="2" height="1"/><rect x="5" y="7" width="3" height="1"/><rect x="2" y="9" width="4" height="1"/><rect x="7" y="9" width="3" height="1"/><rect x="2" y="11" width="3" height="1"/><rect x="6" y="11" width="4" height="1"/></g></svg>
<svg style="left:35px;top:65px" width="6" height="4"><path d="M0 0h5.5L2.75 3z" fill="#000"/></svg>
<svg style="left:46px;top:58px" width="16" height="16" viewBox="0 0 16 16"><path d="M0.5 4.5h5l1 1.5h5v8H0.5z" fill="#f8f870" stroke="#000"/><path d="M0.5 14.5l3-6h12l-3 6z" fill="#8a8a10" stroke="#000"/><path d="M8 3a4 3 0 0 1 6 0M14 3l1-2M14 3l-2 -1" fill="none" stroke="#000"/></svg>
<svg style="left:70px;top:58px" width="15" height="15" viewBox="0 0 15 15"><rect x="0.5" y="0.5" width="14" height="14" fill="#a8a020" stroke="#000"/><rect x="3" y="1" width="9" height="6" fill="#f4f4f4"/><rect x="3" y="9" width="9" height="5.5" fill="#101010"/><rect x="9" y="10" width="2" height="3.5" fill="#f0f0f0"/></svg>
<svg style="left:91px;top:58px" width="16" height="16" viewBox="0 0 16 16"><path d="M2 8l5-5h5l-3 -2M12 3l-2 3M14 8l-5 5H4l3 2M4 13l2-3" fill="none" stroke="#60b060" stroke-width="2.4" stroke-dasharray="1 0.6"/></svg>
<svg style="left:113px;top:58px" width="16" height="15" viewBox="0 0 16 15"><path d="M4 1h8l1 4H3z" fill="#fff" stroke="#000"/><path d="M0.5 6.5h15v6h-15z" fill="#fff" stroke="#000" stroke-width="1.4"/><path d="M1 12.5h14v2H1z" fill="#fff" stroke="#000"/><path d="M6 9.5h5" stroke="#e0c000" stroke-width="1.5"/></svg>
<svg style="left:137px;top:58px" width="1" height="16"><path d="M0.5 0V16" stroke="#000" stroke-dasharray="1 2"/></svg>
<svg style="left:148px;top:58px" width="12" height="16" viewBox="0 0 12 16"><path d="M2 0l4 8M10 0l-4 8" stroke="#000" stroke-dasharray="1 1"/><path d="M6 8l-5 5 2 2M6 8l5 5-2 2" fill="none" stroke="#1010f0" stroke-dasharray="1.2 1"/></svg>
<svg style="left:168px;top:58px" width="16" height="16" viewBox="0 0 16 16"><path d="M0.5 0.5h5l2 2v8h-7z" fill="none" stroke="#000" stroke-dasharray="1 1"/><path d="M5.5 5.5h6l3 3v7h-9z" fill="none" stroke="#000030" stroke-dasharray="1 1"/><path d="M7 8h6M7 10h6M7 12h6M7 14h6" stroke="#1010a0" stroke-dasharray="1 1"/></svg>
<svg style="left:190px;top:58px" width="16" height="16" viewBox="0 0 16 16"><rect x="0.5" y="2.5" width="11" height="12" rx="1" fill="#807040" stroke="#000"/><path d="M4 2h4l-2 -2z" fill="#f0e000" stroke="#000"/><rect x="5.5" y="7.5" width="10" height="8" fill="#fff" stroke="#0a0a90" stroke-width="1.3"/><path d="M7 10h4M7 12.5h7" stroke="#000"/></svg>
<svg style="left:212px;top:58px" width="16" height="16" viewBox="0 0 16 16"><path d="M2 5a6 5 0 1 1 10 5l-2 3" fill="none" stroke="#000" stroke-width="1.4"/><path d="M0 6l4-4v5z" fill="#000"/><path d="M0 14.5h9" stroke="#000" stroke-width="2"/><path d="M10 14.5h5" stroke="#000" stroke-width="2" stroke-dasharray="1 1"/></svg>
<svg style="left:234px;top:58px" width="16" height="16" viewBox="0 0 16 16"><path d="M14 6a6 5 0 1 0 -10 4" fill="none" stroke="#000" stroke-dasharray="1 1.2"/><path d="M11 3l3 3-3 3" fill="none" stroke="#000"/><path d="M0 14.5h16" stroke="#000" stroke-dasharray="1 1"/></svg>
<svg style="left:258px;top:58px" width="1" height="16"><path d="M0.5 0V16" stroke="#000" stroke-dasharray="1 2"/></svg>
<svg style="left:267px;top:58px" width="16" height="16" viewBox="0 0 16 16"><circle cx="8" cy="8" r="7" fill="none" stroke="#70c070" stroke-width="3" stroke-dasharray="1 1"/><circle cx="8" cy="8" r="4.5" fill="#a0d8a0"/><path d="M5 8h6M8 5v6" stroke="#fff" stroke-width="2"/></svg>
<svg style="left:286px;top:66px" width="6" height="4"><path d="M0.5 0.5l2.5 2.5 2.5-2.5" fill="none" stroke="#000"/></svg>
<svg style="left:298px;top:58px" width="16" height="16" viewBox="0 0 16 16"><path d="M3 1h3v4h1v-4h3v4l4 5v5H9v-5H7v5H2v-5l1 -5z" fill="#000"/><path d="M3 11v2M12 11v2M5 7v2M10 7v2" stroke="#fff"/></svg>
<svg style="left:319px;top:58px" width="16" height="16" viewBox="0 0 16 16"><rect x="0.5" y="0.5" width="6" height="6" fill="#fff" stroke="#000" stroke-width="1.2"/><rect x="0.5" y="9.5" width="6" height="6" fill="#fff" stroke="#000" stroke-width="1.2"/><path d="M2 3.5h3M3.5 2v3M2 12.5h3M3.5 11v3M7 3.5h9M7 12.5h9" stroke="#000"/></svg>
<div class="t" style="left:360px;top:58px;height:17px;line-height:17px;">Help</div>
<div style="position:absolute;left:388px;top:57px;width:74px;height:19px;background:#fff;border-top:1px solid #a0a0a0;border-left:1px solid #a0a0a0;border-right:1px solid #f0f0f0;border-bottom:1px solid #f0f0f0"></div>
<svg style="left:470px;top:58px" width="16" height="16" viewBox="0 0 16 16"><path d="M3 7h4v8H1v-6zM9 7h4l2 2v6H9z" fill="#303030"/><path d="M2 4a3.5 3 0 1 1 5 2.5L6 9v2" fill="none" stroke="#f09020" stroke-width="2.4"/><circle cx="6" cy="13.5" r="1.3" fill="#f09020"/></svg>
<svg style="left:511px;top:58px" width="16" height="16" viewBox="0 0 16 16"><path d="M1 6l6 5M5 14l2-3M8 12l2-3M11 12l2-3" fill="none" stroke="#000"/><path d="M7 1l3 2-3 2 3 2-3 2" fill="none" stroke="#1030c0"/></svg>
<svg style="left:532px;top:58px" width="16" height="16" viewBox="0 0 16 16"><rect x="0.5" y="4.5" width="15" height="11" fill="#fff" stroke="#000"/><path d="M1 1h14" stroke="#2040c0" stroke-dasharray="1 1"/><path d="M4 6a4 3 0 1 1 5 3v3" fill="none" stroke="#0a7af0" stroke-width="2.6"/><circle cx="9" cy="14.5" r="1.3" fill="#0a7af0"/><path d="M2 10h12M2 12h12" stroke="#000" stroke-dasharray="1 1"/></svg>
<svg style="left:553px;top:58px" width="16" height="16" viewBox="0 0 16 16"><rect x="0.5" y="5.5" width="15" height="10" fill="#fff" stroke="#000"/><path d="M1 1h14M1 3h14" stroke="#2040c0" stroke-dasharray="1 1"/><path d="M2 5l2.5 3 2.5-3zM9 5l2.5 3 2.5-3z" fill="#103090"/><path d="M2 10h12M2 12h12" stroke="#000" stroke-dasharray="1 1"/></svg>
<svg style="left:575px;top:58px" width="16" height="16" viewBox="0 0 16 16"><path d="M0 1.5h3M0 3.5h3M0 5.5h3M0 7.5h3" stroke="#6070c0"/><path d="M4.5 0.5h8l2 2v9h-10l-1-1z" fill="#fff" stroke="#000"/><path d="M6 3.5h6M6 5.5h6M6 7.5h6" stroke="#3040a0" stroke-dasharray="2 1"/><path d="M3.5 9.5l-3 3 3 3 3-3z" fill="#e00020" stroke="#000"/><path d="M13 11l-2 2 2 2 2-2z" fill="#e00020" stroke="#000"/></svg>
<svg style="left:596px;top:58px" width="16" height="16" viewBox="0 0 16 16"><rect x="0.5" y="2.5" width="11" height="13" fill="#fff" stroke="#707070"/><path d="M2 5.5h7M2 7.5h5M2 9.5h7M2 11.5h5" stroke="#000"/><path d="M5 0l10 10M15 0L5 10" stroke="#900000" stroke-width="2"/><path d="M13 10v5M11 13l2 2 2-2" fill="none" stroke="#0a2090" stroke-width="1.3"/></svg>
<div style="position:absolute;left:638px;top:56px;width:20px;height:21px;background:#f0f0f0;border-top:1px solid #a0a0a0;border-left:1px solid #a0a0a0;border-right:1px solid #fff;border-bottom:1px solid #fff;box-shadow:inset -1px -1px 0 #a0a0a0"></div>
<svg style="left:640px;top:58px" width="15" height="15" viewBox="0 0 15 15"><rect x="1" y="1" width="8" height="8" fill="none" stroke="#007000" stroke-width="2.2"/><rect x="6" y="6" width="8" height="8" fill="none" stroke="#007000" stroke-width="2.2"/></svg>
<svg style="left:666px;top:58px" width="16" height="16" viewBox="0 0 16 16"><rect x="5.5" y="2.5" width="10" height="13" fill="#fff" stroke="#000"/><path d="M7 5h6M7 7h6M7 9h6M7 11h6" stroke="#000"/><path d="M2 16V9h3M3 8V1l-2 2M3 1l2 2" fill="none" stroke="#2050e0" stroke-width="1.3"/><path d="M1 16h3V10" fill="none" stroke="#c02020" stroke-width="1.5"/></svg>
<svg style="left:683px;top:66px" width="6" height="4"><path d="M0 0h5.5L2.75 3z" fill="#000"/></svg>
<svg style="left:694px;top:58px" width="16" height="16" viewBox="0 0 16 16"><path d="M8 0l7 7h-4v9H5V7H1z" fill="#101010"/><path d="M8 1l-5 5h3v9h2z" fill="#707070"/></svg>
<svg style="left:716px;top:58px" width="16" height="16" viewBox="0 0 16 16"><path d="M0 8l7-7v4h9v6H7v4z" fill="#101010"/></svg>
<svg style="left:739px;top:58px" width="16" height="16" viewBox="0 0 16 16"><path d="M16 8l-7-7v4H0v6h9v4z" fill="#909090" stroke="#606060" stroke-width="0.6" stroke-dasharray="1 1"/></svg>
<svg style="left:763px;top:58px" width="1" height="16"><path d="M0.5 0V16" stroke="#000" stroke-dasharray="1 2"/></svg>
<svg style="left:772px;top:58px" width="16" height="16" viewBox="0 0 16 16"><rect x="0.5" y="2.5" width="12" height="13" fill="#fff" stroke="#000"/><path d="M2 5.5h6M2 7.5h5M2 9.5h6M2 11.5h4M2 13.5h6" stroke="#000"/><path d="M11 16V1M9 4l2-3 2 3M9 2h4" fill="none" stroke="#0a2090" stroke-width="1.4"/></svg>
<div style="position:absolute;left:795px;top:57px;width:61px;height:20px;background:#fff;border-top:1px solid #a0a0a0;border-left:1px solid #a0a0a0"></div>
<div class="t" style="left:795px;top:59px;height:18px;line-height:18px;font-family:'Liberation Mono',monospace;font-size:11.5px;color:#201830;width:58px;text-align:right">100 ns</div>
<div style="position:absolute;left:855px;top:57px;width:14px;height:10px;background:#f0f0f0;border-top:1px solid #fff;border-left:1px solid #fff;border-right:1px solid #808080;border-bottom:1px solid #808080"></div>
<div style="position:absolute;left:855px;top:67px;width:14px;height:10px;background:#f0f0f0;border-top:1px solid #fff;border-left:1px solid #fff;border-right:1px solid #808080;border-bottom:1px solid #808080"></div>
<svg style="left:858px;top:59px" width="8" height="16"><path d="M0 4.5h8L4 0.5zM0 10.5h8L4 14.5z" fill="#000"/></svg>
<svg style="left:876px;top:58px" width="16" height="16" viewBox="0 0 16 16"><rect x="0.5" y="2.5" width="12" height="13" fill="#fff" stroke="#000"/><path d="M2 5.5h6M2 7.5h5M2 9.5h6M2 11.5h4M2 13.5h6" stroke="#000"/><path d="M12 0v15M10 12l2 3 2-3M10 15h4" fill="none" stroke="#0a2090" stroke-width="1.4"/></svg>
<svg style="left:899px;top:58px" width="16" height="16" viewBox="0 0 16 16"><rect x="0.5" y="2.5" width="12" height="13" fill="#fff" stroke="#000"/><path d="M2 5.5h6M2 7.5h5M2 9.5h6M2 11.5h4M2 13.5h6" stroke="#000"/><path d="M12 4v11M10 13l2 2 2-2" fill="none" stroke="#0a2090" stroke-width="1.4"/><path d="M10 3l2-2 2 2" fill="none" stroke="#e02020" stroke-width="1.2"/></svg>
<svg style="left:922px;top:58px" width="16" height="16" viewBox="0 0 16 16"><rect x="0.5" y="2.5" width="12" height="13" fill="#fff" stroke="#000"/><path d="M2 5.5h6M2 7.5h5M2 9.5h6M2 11.5h4M2 13.5h6" stroke="#000"/><path d="M12 2v13M10 13l2 2 2-2" fill="none" stroke="#0a2090" stroke-width="1.4"/></svg>
<svg style="left:942px;top:58px" width="16" height="16" viewBox="0 0 16 16"><rect x="0.5" y="2.5" width="12" height="13" fill="#fff" stroke="#000"/><path d="M2 5.5h6M2 7.5h5M2 9.5h6M2 11.5h4M2 13.5h6" stroke="#000"/><path d="M12 8v7M10 13l2 2 2-2" fill="none" stroke="#0a2090" stroke-width="1.4"/><path d="M4 0l10 10M14 0L4 10" stroke="#900000" stroke-width="2"/></svg>
<svg style="left:964px;top:58px" width="16" height="16" viewBox="0 0 16 16"><circle cx="8" cy="8" r="6.3" fill="none" stroke="#e04040" stroke-width="2.5" stroke-dasharray="1 1"/><path d="M10 5a3 3 0 1 0 0 6" fill="none" stroke="#e04040" stroke-width="2" stroke-dasharray="1 1"/></svg>
<svg style="left:990px;top:58px" width="1" height="16"><path d="M0.5 0V16" stroke="#000" stroke-dasharray="1 2"/></svg>
<svg style="left:998px;top:58px" width="16" height="16" viewBox="0 0 16 16"><path d="M1 1l14 14M15 1L1 15" stroke="#a03020" stroke-width="1.2"/><path d="M3 3h4l5 5-4 6H3" fill="none" stroke="#202020" stroke-dasharray="1 1"/></svg>
<div style="position:absolute;left:1021px;top:57px;width:20px;height:21px;background:#f0f0f0;border-top:1px solid #a0a0a0;border-left:1px solid #a0a0a0;border-right:1px solid #fff;border-bottom:1px solid #fff;box-shadow:inset -1px -1px 0 #a0a0a0"></div>
<svg style="left:1022px;top:59px" width="16" height="16" viewBox="0 0 16 16"><path d="M1 1h5v4H3v3H1z" fill="#000"/><rect x="3" y="2" width="2" height="2" fill="#fff"/><path d="M5 16V9h2v7zM8 16V6h2v10zM11 16V3h2v13z" fill="#20a020"/><path d="M8 16v-4h2v4M11 16v-6h2v6" fill="#e0e000"/><path d="M11 16V11h2" fill="#e02020"/><path d="M0 15.5h15" stroke="#000"/></svg>
<div style="position:absolute;left:1047px;top:57px;width:20px;height:21px;background:#f0f0f0;border-top:1px solid #a0a0a0;border-left:1px solid #a0a0a0;border-right:1px solid #fff;border-bottom:1px solid #fff;box-shadow:inset -1px -1px 0 #a0a0a0"></div>
<svg style="left:1048px;top:59px" width="16" height="16" viewBox="0 0 16 16"><path d="M0 1h8v6H6V3H5v4H3V3H2v4H0z" fill="#000"/><path d="M5 16V9h2v7zM8 16V6h2v10zM11 16V3h2v13z" fill="#20a020"/><path d="M8 16v-4h2v4M11 16v-6h2v6" fill="#e0e000"/><path d="M0 15.5h15" stroke="#000"/></svg>
<svg style="left:1072px;top:58px" width="16" height="16" viewBox="0 0 16 16"><path d="M4 14c-2-2-3-4-3-6l1-1 2 2V2l1-1 1 1v5V1l1-1 1 1v6V2l1-1 1 1v6V4l1-1 1 1v7c0 2-1 3-3 4z" fill="#fff" stroke="#000"/><path d="M8 15l6-5" stroke="#80a0d0" stroke-width="3"/></svg>
<svg style="left:1112px;top:58px" width="16" height="16" viewBox="0 0 16 16"><path d="M6 0h4v5h4l-6 6-6-6h4z" fill="#1040e0"/><circle cx="8" cy="14" r="2" fill="#1040e0"/></svg>
<svg style="left:1133px;top:58px" width="16" height="16" viewBox="0 0 16 16"><path d="M2 11a6 6 0 0 1 11 -4l2-1-1 7-6-2 2-1a4 4 0 0 0 -6 2" fill="#1040e0"/><circle cx="3" cy="12.5" r="2" fill="#1040e0"/></svg>
<svg style="left:1156px;top:58px" width="16" height="16" viewBox="0 0 16 16"><path d="M8 0l6 6h-4v5H6V6H2z" fill="#1040e0"/><circle cx="8" cy="14" r="2" fill="#1040e0"/></svg>
<svg style="left:1180px;top:58px" width="1" height="16"><path d="M0.5 0V16" stroke="#000" stroke-dasharray="1 2"/></svg>
<svg style="left:1190px;top:58px" width="16" height="16" viewBox="0 0 16 16"><path d="M6 0h4v4h4l-6 6-6-6h4z" fill="#1040e0"/><path d="M1 11v4M3 11v4M14 11v4M12 11v4" stroke="#1040e0"/><circle cx="8" cy="13" r="2.2" fill="#1040e0"/></svg>
<svg style="left:1208px;top:65px" width="6" height="4"><path d="M0 0h5.5L2.75 3z" fill="#000"/></svg>
<svg style="left:1220px;top:58px" width="16" height="16" viewBox="0 0 16 16"><path d="M2 10a6 6 0 0 1 11 -4l2-1-1 7-6-2 2-1a4 4 0 0 0 -6 2" fill="#1040e0"/><circle cx="3" cy="11" r="2" fill="#1040e0"/><path d="M1 15h15" stroke="#1040e0" stroke-dasharray="1 1" stroke-width="2"/></svg>
<svg style="left:1240px;top:65px" width="6" height="4"><path d="M0 0h5.5L2.75 3z" fill="#000"/></svg>
<svg style="left:1252px;top:58px" width="16" height="16" viewBox="0 0 16 16"><path d="M8 0l6 6h-4v4H6V6H2z" fill="#1040e0"/><path d="M1 11v4M3 11v4M14 11v4M12 11v4" stroke="#1040e0"/><circle cx="8" cy="13" r="2.2" fill="#1040e0"/></svg>
<div class="t" style="left:17px;top:89px;height:17px;line-height:17px;">Layout</div>
<div style="position:absolute;left:56px;top:89px;width:122px;height:19px;background:#f0f0f0;border-top:1px solid #a0a0a0;border-left:1px solid #a0a0a0;border-right:1px solid #fff;border-bottom:1px solid #fff"></div>
<div class="t" style="left:58px;top:91px;height:18px;line-height:18px;font-family:'Liberation Mono',monospace;font-size:12px;color:#202020">Simulate</div>
<div style="position:absolute;left:180px;top:89px;width:18px;height:18px;background:#f0f0f0;border-top:1px solid #fff;border-left:1px solid #fff;border-right:1px solid #808080;border-bottom:1px solid #808080"></div>
<svg style="left:183px;top:95px" width="12" height="7"><path d="M0 0h12L6 6.5z" fill="#000"/></svg>
<div class="t" style="left:225px;top:89px;height:17px;line-height:17px;color:#7a7a7a">ColumnLayout</div>
<div style="position:absolute;left:299px;top:89px;width:214px;height:19px;background:#f0f0f0;border-top:1px solid #a0a0a0;border-left:1px solid #a0a0a0;border-right:1px solid #fff;border-bottom:1px solid #fff"></div>
<div class="t" style="left:301px;top:91px;height:18px;line-height:18px;font-family:'Liberation Mono',monospace;font-size:12px;color:#8a7a8a">AllColumns</div>
<div style="position:absolute;left:515px;top:89px;width:17px;height:18px;background:#f0f0f0;border-top:1px solid #fff;border-left:1px solid #fff;border-right:1px solid #808080;border-bottom:1px solid #808080"></div>
<svg style="left:518px;top:95px" width="11" height="7"><path d="M0.5 0.5h10L5.5 6z" fill="none" stroke="#404040" stroke-dasharray="1 1"/><path d="M2 2h7L5.5 5z" fill="#303030" opacity=".7"/></svg>
<svg style="left:558px;top:90px" width="16" height="16" viewBox="0 0 16 16"><path d="M1 3c3-2 6 1 9-1l-1 7c-3 2-6-1-9 1z" fill="#6ab8f0" stroke="#3a88d0" stroke-width="0.8"/><path d="M11 1l-2 14" stroke="#b07830" stroke-width="1.6"/><circle cx="11" cy="12" r="3.8" fill="#40a040"/><path d="M11 10v4M9 12h4" stroke="#fff" stroke-width="1.5"/></svg>
<svg style="left:578px;top:97px" width="6" height="4"><path d="M0 0h5.5L2.75 3z" fill="#000"/></svg>
<svg style="left:590px;top:90px" width="16" height="16" viewBox="0 0 16 16"><path d="M1 3c3-2 6 1 9-1l-1 7c-3 2-6-1-9 1z" fill="#6ab8f0" stroke="#3a88d0" stroke-width="0.8"/><path d="M11 1l-2 14" stroke="#b07830" stroke-width="1.6"/><circle cx="11" cy="12" r="3.8" fill="#e07020"/><path d="M9 12h4" stroke="#fff" stroke-width="1.5"/></svg>
<svg style="left:608px;top:97px" width="6" height="4"><path d="M0 0h5.5L2.75 3z" fill="#000"/></svg>
<svg style="left:620px;top:90px" width="16" height="16" viewBox="0 0 16 16"><path d="M1 3c3-2 6 1 9-1l-1 7c-3 2-6-1-9 1z" fill="#6ab8f0" stroke="#3a88d0" stroke-width="0.8"/><path d="M11 1l-2 14" stroke="#b07830" stroke-width="1.6"/><path d="M14 5L6 15l-2-1L12 4z" fill="#f0d060" stroke="#b08020" stroke-width="0.8"/></svg>
<svg style="left:643px;top:90px" width="16" height="16" viewBox="0 0 16 16"><path d="M1 3c3-2 6 1 9-1l-1 7c-3 2-6-1-9 1z" fill="#6ab8f0" stroke="#3a88d0" stroke-width="0.8"/><path d="M11 1l-2 14" stroke="#b07830" stroke-width="1.6"/><rect x="6.5" y="7.5" width="9" height="8" fill="#fff" stroke="#3060c0" stroke-width="1.2"/><path d="M8 13h5" stroke="#60c060" stroke-width="2"/></svg>
<svg style="left:662px;top:97px" width="6" height="4"><path d="M0 0h5.5L2.75 3z" fill="#000"/></svg>
<svg style="left:673px;top:90px" width="16" height="16" viewBox="0 0 16 16"><path d="M1 3c3-2 6 1 9-1l-1 7c-3 2-6-1-9 1z" fill="#6ab8f0" stroke="#3a88d0" stroke-width="0.8"/><path d="M11 1l-2 14" stroke="#b07830" stroke-width="1.6"/><path d="M7 10h4V7l5 4.5-5 4.5v-3H7z" fill="#40a040"/></svg>
<div style="position:absolute;left:713px;top:90px;width:19px;height:19px;background:#fcfcfc;border-top:1px solid #a0a0a0;border-left:1px solid #a0a0a0"></div>
<svg style="left:715px;top:92px" width="16" height="16"><path d="M8 5v6M7 11h2M7 5h2" stroke="#000" stroke-dasharray="1 1"/></svg>
<div style="position:absolute;left:739px;top:90px;width:19px;height:19px;background:#fcfcfc;border-top:1px solid #a0a0a0;border-left:1px solid #a0a0a0"></div>
<svg style="left:741px;top:92px" width="16" height="16"><circle cx="8" cy="8" r="3.5" fill="none" stroke="#000" stroke-dasharray="1 1"/></svg>
<div style="position:absolute;left:765px;top:90px;width:19px;height:19px;background:#fcfcfc;border-top:1px solid #a0a0a0;border-left:1px solid #a0a0a0"></div>
<svg style="left:767px;top:92px" width="16" height="16"><path d="M3 5v6M2 5h3M2 11h3M5 11l4-6M12 5a2.5 3 0 1 0 .1 0" fill="none" stroke="#000" stroke-dasharray="1 1"/></svg>
<div style="position:absolute;left:791px;top:90px;width:19px;height:19px;background:#fcfcfc;border-top:1px solid #a0a0a0;border-left:1px solid #a0a0a0"></div>
<svg style="left:793px;top:92px" width="16" height="16"><rect x="3.5" y="3.5" width="9" height="9" fill="none" stroke="#000" stroke-dasharray="1 1"/><path d="M8 6v5" stroke="#000" stroke-dasharray="1 1"/></svg>
<div style="position:absolute;left:817px;top:90px;width:20px;height:19px;background:#f0f0f0;border-top:1px solid #fff;border-left:1px solid #fff;border-right:1px solid #808080;border-bottom:1px solid #808080"></div>
<svg style="left:820px;top:93px" width="16" height="14"><text x="1" y="11" font-family="Liberation Sans" font-size="8.5" fill="#505050">ALL</text></svg>
<svg style="left:843px;top:90px" width="16" height="16" viewBox="0 0 16 16"><path d="M2 14l12-12M4 15l11-11M1 12l11-11" stroke="#4060e0" stroke-width="1.5" stroke-dasharray="1 1"/><path d="M6 2l2 2M12 8l3 3" stroke="#c0a0e0" stroke-dasharray="1 1"/></svg>
<div style="position:absolute;left:883px;top:90px;width:20px;height:20px;background:#fafafa;border-top:1px solid #a0a0a0;border-left:1px solid #a0a0a0;border-right:1px solid #fff;border-bottom:1px solid #fff;box-shadow:inset -1px -1px 0 #a0a0a0"></div>
<div style="position:absolute;left:909px;top:90px;width:20px;height:20px;background:#f0f0f0;border-top:1px solid #fff;border-left:1px solid #fff;border-right:1px solid #808080;border-bottom:1px solid #808080"></div>
<div style="position:absolute;left:935px;top:90px;width:20px;height:20px;background:#f0f0f0;border-top:1px solid #fff;border-left:1px solid #fff;border-right:1px solid #808080;border-bottom:1px solid #808080"></div>
<div style="position:absolute;left:961px;top:90px;width:20px;height:20px;background:#f0f0f0;border-top:1px solid #fff;border-left:1px solid #fff;border-right:1px solid #808080;border-bottom:1px solid #808080"></div>
<svg style="left:885px;top:92px" width="16" height="16" viewBox="0 0 16 16"><g fill="#30557f" stroke="#1a2a40" stroke-width="0.7"><rect x="6.3" y="0.3" width="3.4" height="4" transform="rotate(0 8 8)"/><rect x="6.3" y="0.3" width="3.4" height="4" transform="rotate(45 8 8)"/><rect x="6.3" y="0.3" width="3.4" height="4" transform="rotate(90 8 8)"/><rect x="6.3" y="0.3" width="3.4" height="4" transform="rotate(135 8 8)"/><rect x="6.3" y="0.3" width="3.4" height="4" transform="rotate(180 8 8)"/><rect x="6.3" y="0.3" width="3.4" height="4" transform="rotate(225 8 8)"/><rect x="6.3" y="0.3" width="3.4" height="4" transform="rotate(270 8 8)"/><rect x="6.3" y="0.3" width="3.4" height="4" transform="rotate(315 8 8)"/><circle cx="8" cy="8" r="5.3"/></g><g fill="#30557f"><rect x="6.6" y="0.6" width="2.8" height="4" transform="rotate(0 8 8)"/><rect x="6.6" y="0.6" width="2.8" height="4" transform="rotate(45 8 8)"/><rect x="6.6" y="0.6" width="2.8" height="4" transform="rotate(90 8 8)"/><rect x="6.6" y="0.6" width="2.8" height="4" transform="rotate(135 8 8)"/><rect x="6.6" y="0.6" width="2.8" height="4" transform="rotate(180 8 8)"/><rect x="6.6" y="0.6" width="2.8" height="4" transform="rotate(225 8 8)"/><rect x="6.6" y="0.6" width="2.8" height="4" transform="rotate(270 8 8)"/><rect x="6.6" y="0.6" width="2.8" height="4" transform="rotate(315 8 8)"/><circle cx="8" cy="8" r="5"/></g><circle cx="8" cy="8" r="2.2" fill="#f4f8fc"/><path d="M9 9l5-1-2 3 3 0-6 5 1-3-2 0z" fill="#e03030"/></svg>
<svg style="left:911px;top:92px" width="16" height="16" viewBox="0 0 16 16"><g fill="#30557f" stroke="#1a2a40" stroke-width="0.7"><rect x="6.3" y="0.3" width="3.4" height="4" transform="rotate(0 8 8)"/><rect x="6.3" y="0.3" width="3.4" height="4" transform="rotate(45 8 8)"/><rect x="6.3" y="0.3" width="3.4" height="4" transform="rotate(90 8 8)"/><rect x="6.3" y="0.3" width="3.4" height="4" transform="rotate(135 8 8)"/><rect x="6.3" y="0.3" width="3.4" height="4" transform="rotate(180 8 8)"/><rect x="6.3" y="0.3" width="3.4" height="4" transform="rotate(225 8 8)"/><rect x="6.3" y="0.3" width="3.4" height="4" transform="rotate(270 8 8)"/><rect x="6.3" y="0.3" width="3.4" height="4" transform="rotate(315 8 8)"/><circle cx="8" cy="8" r="5.3"/></g><g fill="#30557f"><rect x="6.6" y="0.6" width="2.8" height="4" transform="rotate(0 8 8)"/><rect x="6.6" y="0.6" width="2.8" height="4" transform="rotate(45 8 8)"/><rect x="6.6" y="0.6" width="2.8" height="4" transform="rotate(90 8 8)"/><rect x="6.6" y="0.6" width="2.8" height="4" transform="rotate(135 8 8)"/><rect x="6.6" y="0.6" width="2.8" height="4" transform="rotate(180 8 8)"/><rect x="6.6" y="0.6" width="2.8" height="4" transform="rotate(225 8 8)"/><rect x="6.6" y="0.6" width="2.8" height="4" transform="rotate(270 8 8)"/><rect x="6.6" y="0.6" width="2.8" height="4" transform="rotate(315 8 8)"/><circle cx="8" cy="8" r="5"/></g><circle cx="8" cy="8" r="2.2" fill="#f4f8fc"/><path d="M8 9l-2 5" stroke="#707070" stroke-width="1.5"/><path d="M8 15.5l4-6 4 6z" fill="#f0f040"/><path d="M11 11.5h2M11 13.5h2" stroke="#000"/></svg>
<svg style="left:937px;top:92px" width="16" height="16" viewBox="0 0 16 16"><g fill="#30557f" stroke="#1a2a40" stroke-width="0.7"><rect x="6.3" y="0.3" width="3.4" height="4" transform="rotate(0 8 8)"/><rect x="6.3" y="0.3" width="3.4" height="4" transform="rotate(45 8 8)"/><rect x="6.3" y="0.3" width="3.4" height="4" transform="rotate(90 8 8)"/><rect x="6.3" y="0.3" width="3.4" height="4" transform="rotate(135 8 8)"/><rect x="6.3" y="0.3" width="3.4" height="4" transform="rotate(180 8 8)"/><rect x="6.3" y="0.3" width="3.4" height="4" transform="rotate(225 8 8)"/><rect x="6.3" y="0.3" width="3.4" height="4" transform="rotate(270 8 8)"/><rect x="6.3" y="0.3" width="3.4" height="4" transform="rotate(315 8 8)"/><circle cx="8" cy="8" r="5.3"/></g><g fill="#30557f"><rect x="6.6" y="0.6" width="2.8" height="4" transform="rotate(0 8 8)"/><rect x="6.6" y="0.6" width="2.8" height="4" transform="rotate(45 8 8)"/><rect x="6.6" y="0.6" width="2.8" height="4" transform="rotate(90 8 8)"/><rect x="6.6" y="0.6" width="2.8" height="4" transform="rotate(135 8 8)"/><rect x="6.6" y="0.6" width="2.8" height="4" transform="rotate(180 8 8)"/><rect x="6.6" y="0.6" width="2.8" height="4" transform="rotate(225 8 8)"/><rect x="6.6" y="0.6" width="2.8" height="4" transform="rotate(270 8 8)"/><rect x="6.6" y="0.6" width="2.8" height="4" transform="rotate(315 8 8)"/><circle cx="8" cy="8" r="5"/></g><circle cx="8" cy="8" r="2.2" fill="#f4f8fc"/><path d="M3 15.5l5-7 5 7z" fill="#f0f040"/><path d="M7 12h2M6 14h1M9 14h1" stroke="#000"/></svg>
<svg style="left:963px;top:92px" width="16" height="16" viewBox="0 0 16 16"><g fill="#30557f" stroke="#1a2a40" stroke-width="0.7"><rect x="6.3" y="0.3" width="3.4" height="4" transform="rotate(0 8 8)"/><rect x="6.3" y="0.3" width="3.4" height="4" transform="rotate(45 8 8)"/><rect x="6.3" y="0.3" width="3.4" height="4" transform="rotate(90 8 8)"/><rect x="6.3" y="0.3" width="3.4" height="4" transform="rotate(135 8 8)"/><rect x="6.3" y="0.3" width="3.4" height="4" transform="rotate(180 8 8)"/><rect x="6.3" y="0.3" width="3.4" height="4" transform="rotate(225 8 8)"/><rect x="6.3" y="0.3" width="3.4" height="4" transform="rotate(270 8 8)"/><rect x="6.3" y="0.3" width="3.4" height="4" transform="rotate(315 8 8)"/><circle cx="8" cy="8" r="5.3"/></g><g fill="#30557f"><rect x="6.6" y="0.6" width="2.8" height="4" transform="rotate(0 8 8)"/><rect x="6.6" y="0.6" width="2.8" height="4" transform="rotate(45 8 8)"/><rect x="6.6" y="0.6" width="2.8" height="4" transform="rotate(90 8 8)"/><rect x="6.6" y="0.6" width="2.8" height="4" transform="rotate(135 8 8)"/><rect x="6.6" y="0.6" width="2.8" height="4" transform="rotate(180 8 8)"/><rect x="6.6" y="0.6" width="2.8" height="4" transform="rotate(225 8 8)"/><rect x="6.6" y="0.6" width="2.8" height="4" transform="rotate(270 8 8)"/><rect x="6.6" y="0.6" width="2.8" height="4" transform="rotate(315 8 8)"/><circle cx="8" cy="8" r="5"/></g><circle cx="8" cy="8" r="2.2" fill="#f4f8fc"/><rect x="12" y="8" width="4" height="8" fill="#60e060"/><path d="M12 11.5h4" stroke="#208020"/><circle cx="10.5" cy="7" r="1.8" fill="#60c0ff"/></svg>
<div style="position:absolute;left:1005px;top:90px;width:20px;height:20px;background:#fcfcfc;border-top:1px solid #a0a0a0;border-left:1px solid #a0a0a0"></div>
<svg style="left:1006px;top:92px" width="16" height="16" viewBox="0 0 16 16"><path d="M4 1v11l3-3 3 6 2-1-3-6h4z" fill="#000"/></svg>
<div style="position:absolute;left:1031px;top:90px;width:20px;height:20px;background:#f0f0f0;border-top:1px solid #fff;border-left:1px solid #fff;border-right:1px solid #808080;border-bottom:1px solid #808080"></div>
<div style="position:absolute;left:1057px;top:90px;width:20px;height:20px;background:#f0f0f0;border-top:1px solid #fff;border-left:1px solid #fff;border-right:1px solid #808080;border-bottom:1px solid #808080"></div>
<div style="position:absolute;left:1083px;top:90px;width:20px;height:20px;background:#f0f0f0;border-top:1px solid #fff;border-left:1px solid #fff;border-right:1px solid #808080;border-bottom:1px solid #808080"></div>
<div style="position:absolute;left:1109px;top:90px;width:20px;height:20px;background:#f0f0f0;border-top:1px solid #fff;border-left:1px solid #fff;border-right:1px solid #808080;border-bottom:1px solid #808080"></div>
<svg style="left:1032px;top:91px" width="16" height="16" viewBox="0 0 16 16"><path d="M1 12V1h11" fill="none" stroke="#000" stroke-width="1.6"/><rect x="4.5" y="4.5" width="8" height="8" fill="none" stroke="#000" stroke-width="2.4"/><path d="M10 15h5v-4" fill="none" stroke="#000" stroke-width="1.2"/></svg>
<svg style="left:1058px;top:91px" width="16" height="16" viewBox="0 0 16 16"><path d="M8 1l3 3-3 3-3-3zM8 9l3 3-3 3-3-3zM1 8l3-3 3 3-3 3zM9 8l3-3 3 3-3 3z" fill="none" stroke="#000" stroke-width=".8" stroke-dasharray="1 .6"/></svg>
<svg style="left:1084px;top:91px" width="16" height="16" viewBox="0 0 16 16"><path d="M4 1v12M12 1v12" stroke="#000" stroke-width="1.3"/><rect x="1.5" y="12.5" width="5" height="2.5" fill="#fff" stroke="#000"/><rect x="9.5" y="12.5" width="5" height="2.5" fill="#fff" stroke="#000"/></svg>
<svg style="left:1111px;top:91px" width="16" height="16" viewBox="0 0 16 16"><path d="M1 4h3M1 8h3M1 12h3M3 3l1 1-1 1M3 7l1 1-1 1M3 11l1 1-1 1M5 2h4v13h6" fill="none" stroke="#000"/><path d="M11 2v12M14 2v12" stroke="#000" stroke-dasharray="1 1"/></svg>
<svg style="left:1137px;top:91px" width="1" height="17"><path d="M0.5 0V17" stroke="#000" stroke-dasharray="1 2"/></svg>
<svg style="left:1147px;top:91px" width="16" height="16" viewBox="0 0 16 16"><rect x="1" y="0" width="8" height="16" fill="#000"/><circle cx="5" cy="3.5" r="2.8" fill="#f01010"/><circle cx="5" cy="8" r="2" fill="#e0e000"/><circle cx="5" cy="12.5" r="2" fill="#30c030"/><path d="M11 4v8l4-4z" fill="none" stroke="#000"/></svg>
<svg style="left:1186px;top:90px" width="16" height="16" viewBox="0 0 16 16"><path d="M5 1v12M1.5 13.5h8v2h-8z" fill="none" stroke="#e0b000" stroke-width="1.8"/><path d="M5 8h6M12 1v6M9 4h6" stroke="#e0b000" stroke-width="1.6"/></svg>
<svg style="left:1208px;top:90px" width="16" height="16" viewBox="0 0 16 16"><path d="M5 1v12M1.5 13.5h8v2h-8z" fill="none" stroke="#e0b000" stroke-width="1.8"/><path d="M5 6h8" stroke="#e0b000" stroke-width="1.6"/></svg>
<svg style="left:1230px;top:90px" width="16" height="16" viewBox="0 0 16 16"><path d="M0 1.5h3v13h13" fill="none" stroke="#109030" stroke-width="1.5"/><path d="M6 8h9M6 8l3-3M6 8l3 3" fill="none" stroke="#2020e0" stroke-width="1.8"/></svg>
<svg style="left:1250px;top:90px" width="16" height="16" viewBox="0 0 16 16"><path d="M0 14.5h11v-13h5" fill="none" stroke="#109030" stroke-width="1.5"/><path d="M10 8H1M10 8L7 5M10 8l-3 3" fill="none" stroke="#2020e0" stroke-width="1.8"/></svg>
<svg style="left:1274px;top:90px" width="16" height="16" viewBox="0 0 16 16"><path d="M1 2h4l5 6v6h6" fill="none" stroke="#20a040" stroke-dasharray="1 1"/><path d="M6 6l1.5 1.5L6 9 4.5 7.5zM9 10l1.5 1.5L9 13 7.5 11.5z" fill="none" stroke="#4030e0"/></svg>
<svg style="left:1296px;top:90px" width="16" height="16" viewBox="0 0 16 16"><path d="M1 2h8v12h6" fill="none" stroke="#20a040" stroke-dasharray="1 1"/><path d="M6 6l1.5 1.5L6 9 4.5 7.5zM9 10l1.5 1.5L9 13 7.5 11.5z" fill="none" stroke="#4030e0"/></svg>
<svg style="left:1318px;top:90px" width="16" height="16" viewBox="0 0 16 16"><path d="M1 14h6V2h8" fill="none" stroke="#20a040" stroke-dasharray="1 1"/><path d="M6 6l1.5 1.5L6 9 4.5 7.5zM9 10l1.5 1.5L9 13 7.5 11.5z" fill="none" stroke="#4030e0"/></svg>
<svg style="left:1340px;top:90px" width="16" height="16" viewBox="0 0 16 16"><path d="M1 14h8l5-12h2" fill="none" stroke="#20a040" stroke-dasharray="1 1"/><path d="M6 6l1.5 1.5L6 9 4.5 7.5zM9 10l1.5 1.5L9 13 7.5 11.5z" fill="none" stroke="#4030e0"/></svg>
<svg style="left:16px;top:122px" width="16" height="16" viewBox="0 0 16 16"><g ><path d="M1 2l4 4-4 4M1 5l4 3-4 3M0 14l5-4" fill="none" stroke="#000" stroke-dasharray="1 1"/><path d="M7 8h8M10 6l-3 2 3 2M13 6l-3 2 3 2" fill="none" stroke="#1080f0" stroke-width="1.3"/></g></svg>
<svg style="left:46px;top:122px" width="16" height="16" viewBox="0 0 16 16"><g transform="translate(16 0) scale(-1 1)"><path d="M1 2l4 4-4 4M1 5l4 3-4 3M0 14l5-4" fill="none" stroke="#000" stroke-dasharray="1 1"/><path d="M7 8h8M10 6l-3 2 3 2M13 6l-3 2 3 2" fill="none" stroke="#1080f0" stroke-width="1.3"/></g></svg>
<svg style="left:36px;top:130px" width="6" height="4"><path d="M0.5 0.5l2.5 2.5 2.5-2.5" fill="none" stroke="#000"/></svg>
<svg style="left:66px;top:130px" width="6" height="4"><path d="M0.5 0.5l2.5 2.5 2.5-2.5" fill="none" stroke="#000"/></svg>
<svg style="left:78px;top:122px" width="16" height="16" viewBox="0 0 16 16"><path d="M1 1h4M1 4h3l3 4-3 4H1M1 14h4" fill="none" stroke="#000" stroke-dasharray="1 1"/><path d="M9 4l4 4-4 4-4-4z" fill="#30c040" stroke="#000" stroke-width=".6" stroke-dasharray="1 1"/><circle cx="15" cy="8" r="1" fill="#2040e0"/></svg>
<svg style="left:102px;top:122px" width="1" height="17"><path d="M0.5 0V17" stroke="#000" stroke-dasharray="1 2"/></svg>
<div class="t" style="left:113px;top:122px;height:17px;line-height:17px;font-size:11px;color:#7a7a7a">Search:</div>
<div style="position:absolute;left:156px;top:122px;width:115px;height:19px;background:#f0f0f0;border-top:1px solid #a0a0a0;border-left:1px solid #a0a0a0;border-right:1px solid #fff;border-bottom:1px solid #fff"></div>
<div style="position:absolute;left:274px;top:122px;width:17px;height:18px;background:#f0f0f0;border-top:1px solid #fff;border-left:1px solid #fff;border-right:1px solid #808080;border-bottom:1px solid #808080"></div>
<svg style="left:277px;top:128px" width="11" height="7"><path d="M0.5 0.5h10L5.5 6z" fill="none" stroke="#404040" stroke-dasharray="1 1"/><path d="M2 2h7L5.5 5z" fill="#303030" opacity=".7"/></svg>
<svg style="left:297px;top:122px" width="16" height="16" viewBox="0 0 16 16"><path d="M3 1h3v4h1v-4h3v4l4 5v5H9v-5H7v5H2v-5l1 -5z" fill="#909090" opacity=".85"/><path d="M0 15l4-3M0 15h3" stroke="#2040e0" stroke-width="1.3" stroke-dasharray="1 .8"/></svg>
<svg style="left:316px;top:122px" width="16" height="16" viewBox="0 0 16 16"><path d="M3 1h3v4h1v-4h3v4l4 5v5H9v-5H7v5H2v-5l1 -5z" fill="#909090" opacity=".85"/><path d="M16 15l-4-3M16 15h-3" stroke="#2040e0" stroke-width="1.3" stroke-dasharray="1 .8"/></svg>
<svg style="left:340px;top:122px" width="16" height="16" viewBox="0 0 16 16"><path d="M2 14l12-12M4 15l11-11M1 12l11-11" stroke="#909090" stroke-width="1.6" stroke-dasharray="1 1"/><path d="M6 15l9-9" stroke="#a0c0f0" stroke-width="1.5"/></svg>
<svg style="left:384px;top:122px" width="16" height="16" viewBox="0 0 16 16"><circle cx="6" cy="6" r="5" fill="#fff" stroke="#000" stroke-width="1.5"/><path d="M9.5 9.5l5 5" stroke="#2040c0" stroke-width="2.6"/><path d="M3 6h6M6 3v6" stroke="#000" stroke-width="1.5"/></svg>
<svg style="left:405px;top:122px" width="16" height="16" viewBox="0 0 16 16"><circle cx="6" cy="6" r="5" fill="#fff" stroke="#000" stroke-width="1.5"/><path d="M9.5 9.5l5 5" stroke="#2040c0" stroke-width="2.6"/><path d="M3 6h6" stroke="#000" stroke-width="1.5"/></svg>
<svg style="left:428px;top:122px" width="16" height="16" viewBox="0 0 16 16"><circle cx="6" cy="6" r="5" fill="#0a3a7a" stroke="#000" stroke-width="1.5"/><path d="M9.5 9.5l5 5" stroke="#2040c0" stroke-width="2.6"/><circle cx="5" cy="5" r="1.5" fill="#4080c0"/></svg>
<svg style="left:449px;top:122px" width="16" height="16" viewBox="0 0 16 16"><path d="M4 1v11M1.5 12.5h8v2.5h-8z" fill="none" stroke="#e0a000" stroke-width="1.6"/><circle cx="11" cy="4" r="3" fill="#a0a0a0" stroke="#404040" stroke-width=".8"/><path d="M13 7l2 3" stroke="#2040e0" stroke-width="1.5"/></svg>
<svg style="left:472px;top:122px" width="16" height="16" viewBox="0 0 16 16"><path d="M3 7v5M1 12.5h5v2.5H1zM10 7v5M8 12.5h6v2.5H8z" fill="none" stroke="#e0a000" stroke-width="1.5"/><path d="M3 8h7" stroke="#e0a000" stroke-width="1.4"/><circle cx="11" cy="3.5" r="3" fill="#a0a0a0" stroke="#404040" stroke-width=".8"/></svg>
<svg style="left:493px;top:122px" width="16" height="16" viewBox="0 0 16 16"><path d="M1 1h9v5M1 1v8h5" fill="none" stroke="#2040c0" stroke-dasharray="1 1"/><circle cx="10" cy="10" r="3" fill="#c0c0c0" stroke="#404040" stroke-dasharray="1 1"/><path d="M12 12l3 3" stroke="#2040e0" stroke-width="1.5"/></svg>
<div style="position:absolute;left:533px;top:121px;width:20px;height:20px;background:#fcfcfc;border-top:1px solid #a0a0a0;border-left:1px solid #a0a0a0;border-right:1px solid #fff;border-bottom:1px solid #fff"></div>
<svg style="left:534px;top:122px" width="18" height="18"><path d="M9 2v14M2 15.5h14" stroke="#108040" stroke-width="1.2"/></svg>
<div style="position:absolute;left:559px;top:121px;width:20px;height:20px;background:#fcfcfc;border-top:1px solid #a0a0a0;border-left:1px solid #a0a0a0;border-right:1px solid #fff;border-bottom:1px solid #fff"></div>
<svg style="left:560px;top:122px" width="18" height="18"><path d="M2 15.5h14" stroke="#108040" stroke-width="1.2"/><rect x="6.5" y="1.5" width="5" height="14" fill="#101080" stroke="#000"/></svg>
<div style="position:absolute;left:585px;top:121px;width:20px;height:20px;background:#fcfcfc;border-top:1px solid #a0a0a0;border-left:1px solid #a0a0a0;border-right:1px solid #fff;border-bottom:1px solid #fff"></div>
<svg style="left:586px;top:122px" width="18" height="18"><rect x="1.5" y="1.5" width="15" height="14" fill="#006000" stroke="#000"/><path d="M5 14V3h3v11h3V3h3v11" fill="none" stroke="#40e040" stroke-width="1"/></svg>
<svg style="left:613px;top:123px" width="1" height="16"><path d="M0.5 0V16" stroke="#000" stroke-dasharray="1 2"/></svg>
<svg style="left:622px;top:122px" width="16" height="16" viewBox="0 0 16 16"><defs><pattern id="ck" width="2" height="2" patternUnits="userSpaceOnUse"><rect width="1" height="1" fill="#3040b0"/><rect x="1" y="1" width="1" height="1" fill="#3040b0"/><rect x="1" width="1" height="1" fill="#c0c8f0"/><rect y="1" width="1" height="1" fill="#c0c8f0"/></pattern></defs><rect x="0" y="1" width="15" height="15" fill="url(#ck)"/></svg>
<svg style="left:644px;top:122px" width="16" height="16" viewBox="0 0 16 16"><path d="M1 15h6V2h8" fill="none" stroke="#e0d000" stroke-width="1.6" stroke-dasharray="1 1"/><path d="M4 15V2" stroke="#5060c0" stroke-dasharray="1 1"/><path d="M9 2h6" stroke="#20a040" stroke-dasharray="1 1"/></svg>
<svg style="left:666px;top:122px" width="16" height="16" viewBox="0 0 16 16"><path d="M1 15h7V2h7" fill="none" stroke="#20a040" stroke-dasharray="1 1"/></svg>
<svg style="left:688px;top:122px" width="16" height="16" viewBox="0 0 16 16"><path d="M1 15h7V2h7" fill="none" stroke="#20a040" stroke-dasharray="1 1"/><path d="M8 15V2" stroke="#e0d000" stroke-width="1.4" stroke-dasharray="1 1"/></svg>
<svg style="left:729px;top:122px" width="16" height="16" viewBox="0 0 16 16"><path d="M1 1l8 12M9 1L1 13" stroke="#b02020" stroke-width="1.1"/><path d="M15 4l-4 3 4 3" fill="#404040" stroke="#404040" stroke-dasharray="1 1"/></svg>
<svg style="left:749px;top:122px" width="16" height="16" viewBox="0 0 16 16"><path d="M7 1l8 12M15 1L7 13" stroke="#b02020" stroke-width="1.1"/><path d="M1 4l4 3-4 3" fill="#404040" stroke="#404040" stroke-dasharray="1 1"/></svg>
<div style="position:absolute;left:772px;top:121px;width:20px;height:20px;background:#f0f0f0;border-top:1px solid #fff;border-left:1px solid #fff;border-right:1px solid #808080;border-bottom:1px solid #808080"></div>
<svg style="left:775px;top:123px" width="14" height="16" viewBox="0 0 14 16"><path d="M1.5 1.5h8l3 3v11h-11z" fill="#fff" stroke="#000" stroke-dasharray="1 1"/><path d="M4 8l5 5M9 8l-5 5" stroke="#d02020" stroke-dasharray="1 1"/></svg>
<svg style="left:800px;top:122px" width="16" height="16" viewBox="0 0 16 16"><path d="M2 1l10 10M12 1L2 11" stroke="#c02020" stroke-width="1.4"/><path d="M6 9l3-3 6 6-3 3z" fill="#4070d0" stroke="#203080" stroke-width=".6" stroke-dasharray="1 1"/></svg></body></html>
